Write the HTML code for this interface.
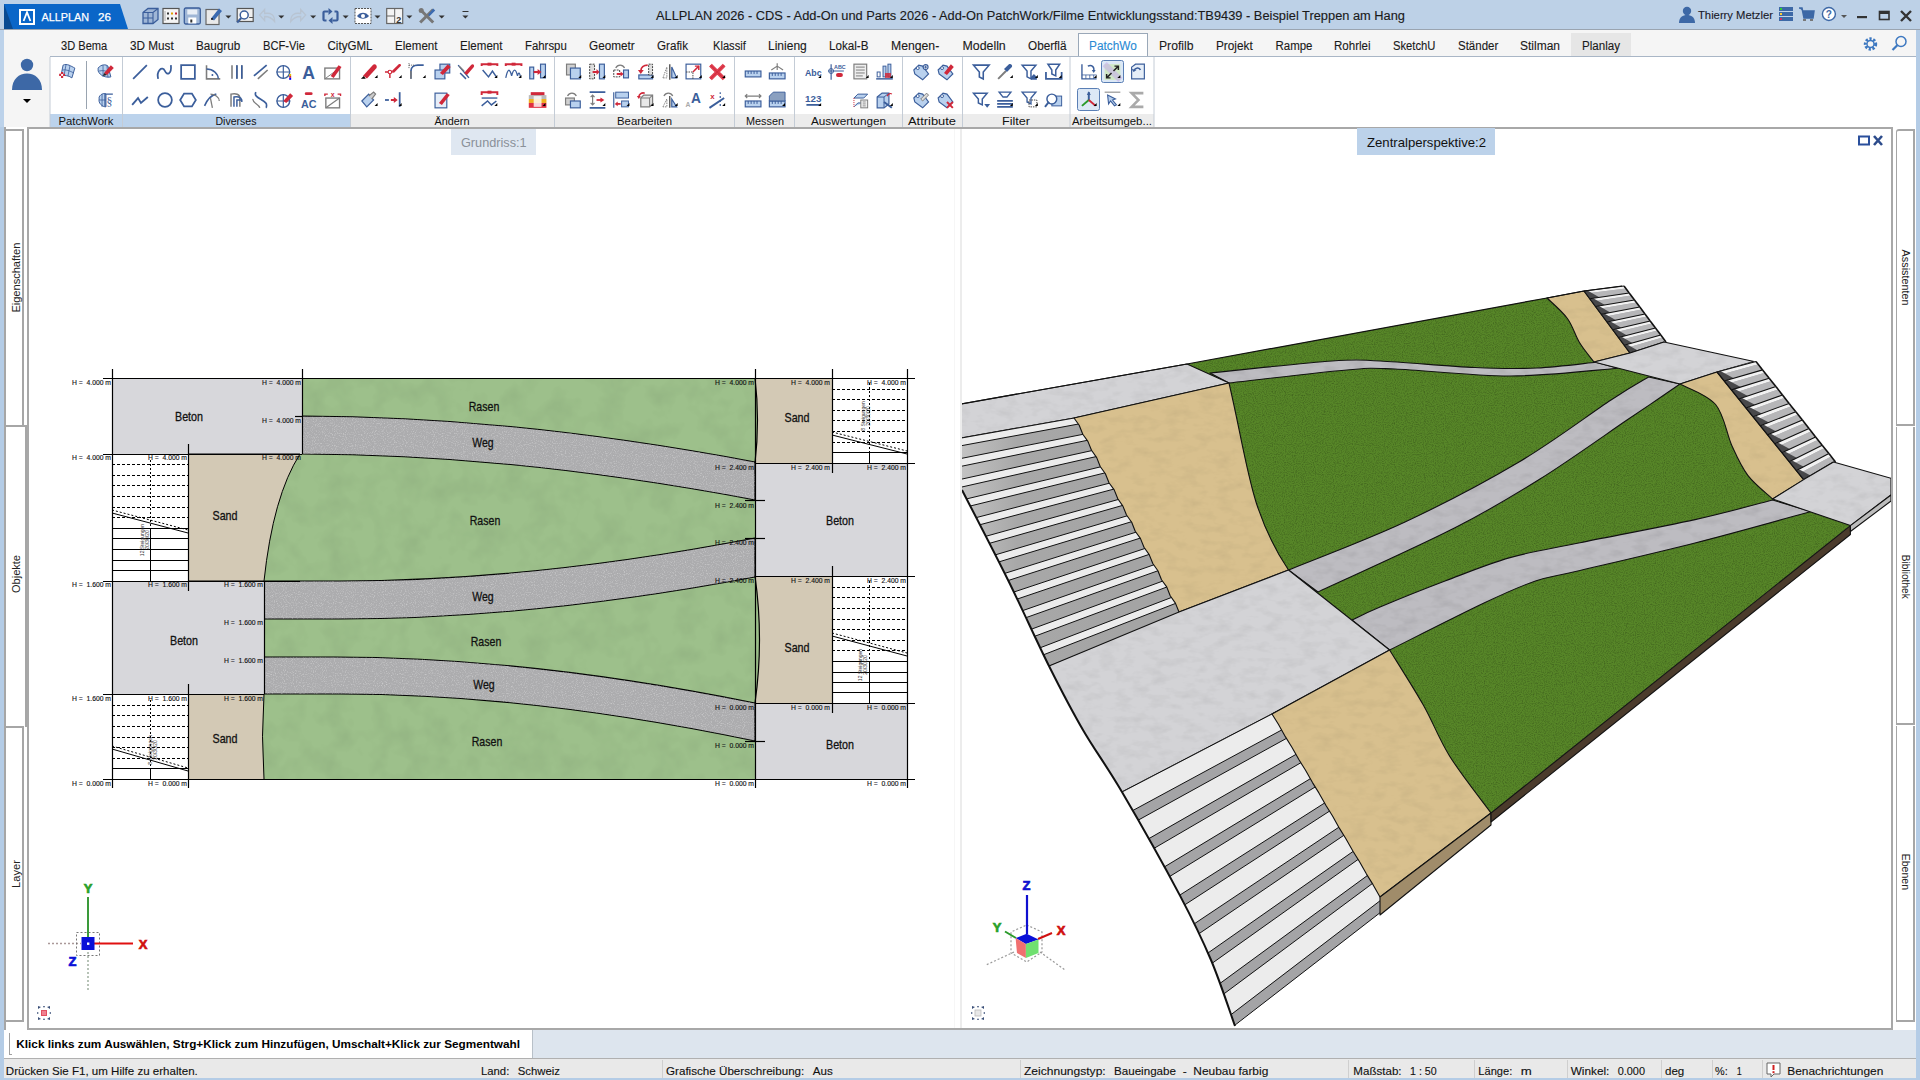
<!DOCTYPE html>
<html><head><meta charset="utf-8">
<style>
*{margin:0;padding:0;box-sizing:border-box}
html,body{width:1920px;height:1080px;overflow:hidden}
body{position:relative;background:#bcd2ea;font-family:"Liberation Sans",sans-serif;color:#111}
.a{position:absolute}
.t{position:absolute;white-space:nowrap}
#title{left:0;top:0;width:1920px;height:29px;background:#bdd1e7}
#tabbar{left:4px;top:30px;width:1912px;height:27px;background:#f5f5f5}
.tab{position:absolute;top:38px;font-size:12px;letter-spacing:-0.45px;color:#1a1a1a}
#ribbon{left:4px;top:56px;width:1912px;height:71px;background:#fff}
.grp{position:absolute;top:56px;height:71px;border-left:1px solid #c8d0da}
.glab{position:absolute;top:114px;height:13px;font-size:11px;color:#111;text-align:center;line-height:13px;letter-spacing:-0.1px}
.vtab{position:absolute;font-size:11px;color:#222;white-space:nowrap}
</style></head><body>
<!-- title bar -->
<div class="a" id="title"></div>
<div class="a" style="left:0;top:29px;width:1920px;height:1px;background:#9aa4b0"></div>
<svg class="a" style="left:0;top:0" width="140" height="30">
<polygon points="4,4 120,4 128,29 4,29" fill="#0a66c8"/>
<polygon points="4,4 4,29 13,29" fill="#094a91"/>
<rect x="20" y="10" width="14" height="14" fill="none" stroke="#fff" stroke-width="2"/>
<path d="M23.6,21 L27,12.2 L30.4,21" fill="none" stroke="#fff" stroke-width="1.8"/>
</svg>

<!-- tab bar -->
<div class="a" id="tabbar"></div>
<div class="a" style="left:1078px;top:33px;width:70px;height:24px;background:#fff;border:1px solid #9aa8b8;border-bottom:none"></div>
<div class="a" style="left:1571px;top:33px;width:60px;height:23px;background:#e6e6e6"></div>

<!-- ribbon -->
<div class="a" id="ribbon"></div>
<div class="a" style="left:50px;top:56px;width:1105px;height:1px;background:#a9b6c6"></div>
<div class="a" style="left:1155px;top:56px;width:761px;height:1px;background:#a9b6c6"></div>

<svg class="a" style="left:0;top:56px" width="1160" height="72" viewBox="0 56 1160 72" font-family="Liberation Sans">
<rect x="4" y="56" width="46" height="71" fill="#f5f5f5"/>
<circle cx="27" cy="65" r="6.2" fill="#3d68a6"/><path d="M12,90 C12,79 19,73.5 27,73.5 C35,73.5 42,79 42,90Z" fill="#3d68a6"/><path d="M23,99 L31,99 L27,103Z" fill="#000"/>
<rect x="50" y="114" width="72.5" height="13" fill="#bcd3ec"/>
<line x1="50" y1="57" x2="50" y2="127" stroke="#c4ccd6" stroke-width="1"/>
<rect x="122.5" y="114" width="228.0" height="13" fill="#bcd3ec"/>
<line x1="122.5" y1="57" x2="122.5" y2="127" stroke="#c4ccd6" stroke-width="1"/>
<rect x="350.5" y="114" width="204.0" height="13" fill="#ececec"/>
<line x1="350.5" y1="57" x2="350.5" y2="127" stroke="#c4ccd6" stroke-width="1"/>
<rect x="554.5" y="114" width="180.0" height="13" fill="#ececec"/>
<line x1="554.5" y1="57" x2="554.5" y2="127" stroke="#c4ccd6" stroke-width="1"/>
<rect x="734.5" y="114" width="60.0" height="13" fill="#ececec"/>
<line x1="734.5" y1="57" x2="734.5" y2="127" stroke="#c4ccd6" stroke-width="1"/>
<rect x="794.5" y="114" width="108.0" height="13" fill="#ececec"/>
<line x1="794.5" y1="57" x2="794.5" y2="127" stroke="#c4ccd6" stroke-width="1"/>
<rect x="902.5" y="114" width="60.0" height="13" fill="#ececec"/>
<line x1="902.5" y1="57" x2="902.5" y2="127" stroke="#c4ccd6" stroke-width="1"/>
<rect x="962.5" y="114" width="107.5" height="13" fill="#ececec"/>
<line x1="962.5" y1="57" x2="962.5" y2="127" stroke="#c4ccd6" stroke-width="1"/>
<rect x="1070" y="114" width="84" height="13" fill="#ececec"/>
<line x1="1070" y1="57" x2="1070" y2="127" stroke="#c4ccd6" stroke-width="1"/>
<line x1="1154" y1="57" x2="1154" y2="127" stroke="#c4ccd6" stroke-width="1"/>
<line x1="86.5" y1="61" x2="86.5" y2="109" stroke="#9aa4b0" stroke-width="1"/>
<rect x="1101.5" y="60.5" width="22" height="22" rx="2" fill="#dce8f6" stroke="#5a7fb5" stroke-width="1"/>
<rect x="1077.5" y="88.5" width="22" height="22" rx="2" fill="#dce8f6" stroke="#5a7fb5" stroke-width="1"/>
<g transform="translate(57.2,62.2) scale(0.98)"><path d="M6,3 C10,1 14,4 18,6 L15,16 C11,13 8,14 4,13Z" fill="#b9d1ee" stroke="#3b5e9b" stroke-width="1"/><path d="M5,8 C9,7 13,9 17,11 M9,2.5 L7,13.5 M13,3.8 L11,14" stroke="#3b5e9b" stroke-width="0.8" fill="none"/><path d="M2,13 L8,13 M5,10 L5,16" stroke="#d0283a" stroke-width="2.2"/><rect x="4" y="12" width="2" height="2" fill="#fff"/></g>
<g transform="translate(95.2,62.2) scale(0.98)"><path d="M3,6 C6,2 11,2 13,4 L16,15 C11,16 5,14 3,9Z" fill="#b9d1ee" stroke="#3b5e9b" stroke-width="1"/><path d="M4,9 C8,8 12,9 15,11 M8,3 L8,15 M12,3.5 L13,15.5" stroke="#3b5e9b" stroke-width="0.8" fill="none"/><path d="M9,11 L16,3 L19,6 L12,13Z" fill="#d0283a"/><path d="M9,11 L12,13 L8,14Z" fill="#222"/></g>
<g transform="translate(95.2,90.2) scale(0.98)"><path d="M4,7 C6,3 10,3 11,4 L11,17 C7,17 3,13 4,9Z" fill="#b9d1ee" stroke="#3b5e9b" stroke-width="1"/><path d="M4,10 L11,10 M7,4 L7,17" stroke="#3b5e9b" stroke-width="0.8"/><path d="M10,4 L18,4 M10,3 L10,17" stroke="#3b5e9b" stroke-width="1.3"/><text x="14.5" y="16" font-size="12" fill="#3b5e9b" text-anchor="middle" font-family="Liberation Serif">§</text></g>
<g transform="translate(130.2,62.2) scale(0.98)"><path d="M3,17 L17,3" stroke="#3b5e9b" stroke-width="1.8"/></g>
<g transform="translate(155.2,62.2) scale(0.98)"><path d="M3,17 C1,9 7,3 10,9 C12,14 17,12 16,3" stroke="#3b5e9b" stroke-width="1.8" fill="none"/></g>
<g transform="translate(178.2,62.2) scale(0.98)"><rect x="3" y="3" width="14" height="14" fill="none" stroke="#3b5e9b" stroke-width="1.8"/></g>
<g transform="translate(202.6,62.2) scale(0.98)"><path d="M4,3 L4,17 L18,17" stroke="#7d7d7d" stroke-width="1.6" fill="none"/><path d="M4,7 C11,7 16,12 16,17" stroke="#3b5e9b" stroke-width="1.4" fill="none"/><circle cx="10" cy="13" r="1" fill="#3b5e9b"/></g>
<g transform="translate(227.1,62.2) scale(0.98)"><path d="M5,3 L5,17 M10,3 L10,17 M15,3 L15,17" stroke="#7d7d7d" stroke-width="1.6"/><path d="M10,3 L10,17 M15,3 L15,17" stroke="#3b5e9b" stroke-width="1.6"/></g>
<g transform="translate(251.0,62.2) scale(0.98)"><path d="M3,14 L16,3" stroke="#3b5e9b" stroke-width="1.8"/><path d="M7,17 L17,8" stroke="#7d7d7d" stroke-width="1.6"/></g>
<g transform="translate(274.5,62.2) scale(0.98)"><circle cx="9" cy="10" r="6.5" fill="none" stroke="#3b5e9b" stroke-width="1.4"/><path d="M2,10 L16,10 M9,3 L9,17" stroke="#3b5e9b" stroke-width="1.2"/><rect x="15" y="12" width="2" height="2" fill="#e8c000"/><rect x="15" y="14" width="2" height="2" fill="#d0283a"/><rect x="15" y="16" width="2" height="2" fill="#00f"/></g>
<g transform="translate(298.9,62.2) scale(0.98)"><text x="10" y="17" font-size="18" font-weight="bold" fill="#3b5e9b" text-anchor="middle" font-family="Liberation Sans">A</text></g>
<g transform="translate(322.9,62.2) scale(0.98)"><rect x="2" y="6" width="15" height="11" fill="none" stroke="#7d7d7d" stroke-width="1.4"/><path d="M2,17 L17,6" stroke="#7d7d7d" stroke-width="1"/><path d="M8,14 L16,3 L19,5 L11,16Z" fill="#d0283a"/></g>
<g transform="translate(130.2,90.2) scale(0.98)"><path d="M2,15 L8,8 L11,13 L18,7" stroke="#3b5e9b" stroke-width="1.9" fill="none"/></g>
<g transform="translate(155.2,90.2) scale(0.98)"><circle cx="10" cy="10" r="7" fill="none" stroke="#3b5e9b" stroke-width="1.8"/></g>
<g transform="translate(178.2,90.2) scale(0.98)"><path d="M6,3.5 L14,3.5 L18,10 L14,16.5 L6,16.5 L2,10Z" fill="none" stroke="#3b5e9b" stroke-width="1.8"/></g>
<g transform="translate(202.6,90.2) scale(0.98)"><path d="M2,16 C5,9 9,5 14,4" stroke="#3b5e9b" stroke-width="1.6" fill="none"/><path d="M8,4 C12,4 17,7 17,11" stroke="#7d7d7d" stroke-width="1.3" fill="none"/><path d="M8,8 L10,18" stroke="#7d7d7d" stroke-width="1.3"/></g>
<g transform="translate(227.1,90.2) scale(0.98)"><path d="M4,17 L4,4 C9,3 13,4 13,8 L13,17" stroke="#7d7d7d" stroke-width="1.5" fill="none"/><path d="M7,17 L7,7 C10,6 14,7 15,10 L15,12" stroke="#3b5e9b" stroke-width="1.5" fill="none"/><path d="M10,17 L10,10 L15,10" stroke="#3b5e9b" stroke-width="1.5" fill="none"/></g>
<g transform="translate(251.0,90.2) scale(0.98)"><path d="M5,2 C2,7 12,9 15,13 C17,15 15,17 16,18" stroke="#3b5e9b" stroke-width="1.7" fill="none"/><path d="M2,9 C1,13 8,14 9,18" stroke="#7d7d7d" stroke-width="1.3" fill="none"/></g>
<g transform="translate(274.5,90.2) scale(0.98)"><circle cx="9" cy="11" r="6.5" fill="none" stroke="#3b5e9b" stroke-width="1.4"/><path d="M2,11 L16,11 M9,4 L9,18" stroke="#3b5e9b" stroke-width="1.2"/><path d="M9,11 L16,3 L19,6 L12,13Z" fill="#d0283a"/></g>
<g transform="translate(298.9,90.2) scale(0.98)"><rect x="6" y="2" width="8" height="3" rx="1.5" fill="#d0283a"/><text x="10" y="18" font-size="11" font-weight="bold" fill="#3b5e9b" text-anchor="middle" font-family="Liberation Sans">AC</text></g>
<g transform="translate(322.9,90.2) scale(0.98)"><rect x="3" y="8" width="14" height="10" fill="none" stroke="#7d7d7d" stroke-width="1.4"/><path d="M3,18 L17,8" stroke="#7d7d7d" stroke-width="1.2"/><path d="M2,6 L2,4 L5,4 M15,4 L18,4 L18,6" stroke="#d0283a" stroke-width="1.4" fill="none"/><text x="10" y="7" font-size="7" font-weight="bold" fill="#d0283a" text-anchor="middle">x</text></g>
<g transform="translate(359.9,62.2) scale(0.98)"><path d="M3,14 L13,3 C15,1 18,3 17,6 L7,17Z" fill="#d0283a"/><path d="M3,14 L7,17" stroke="#fff" stroke-width="1"/><path d="M1,17 L4,14 L6,17Z" fill="#000"/><path d="M15,16 L18,13 L18,16Z" fill="#000"/></g>
<g transform="translate(384.0,62.2) scale(0.98)"><path d="M1,10 L9,10 M6,10 L6,16" stroke="#d0283a" stroke-width="1.5"/><circle cx="6" cy="10" r="1.8" fill="#fff" stroke="#d0283a" stroke-width="1.2"/><path d="M8,9 L15,2 C17,1 18,3 17,4 L10,11Z" fill="#d0283a"/><path d="M15,16 L18,13 L18,16Z" fill="#000"/></g>
<g transform="translate(408.0,62.2) scale(0.98)"><path d="M3,17 L3,9 C3,5 6,3 10,3 L16,3" stroke="#3b5e9b" stroke-width="1.8" fill="none"/><path d="M3,9 L3,17" stroke="#7d7d7d" stroke-width="1.6"/><path d="M1,3 L7,3 M1,1 L1,7" stroke="#333" stroke-width="0.8" stroke-dasharray="1,1"/><path d="M15,16 L18,13 L18,16Z" fill="#000"/></g>
<g transform="translate(432.1,62.2) scale(0.98)"><rect x="8" y="2" width="10" height="9" fill="#b9d1ee" stroke="#3b5e9b" stroke-width="1.2"/><rect x="3" y="8" width="10" height="9" fill="#b9d1ee" stroke="#3b5e9b" stroke-width="1.2"/><path d="M8,11 L16,2 L19,5 L11,13Z" fill="#d0283a"/></g>
<g transform="translate(456.2,62.2) scale(0.98)"><path d="M2,3 L13,16 M4,11 L10,17" stroke="#3b5e9b" stroke-width="1.5"/><path d="M8,11 L15,3 C17,1 19,3 18,5 L11,13Z" fill="#d0283a"/><path d="M3,4 L8,9" stroke="#7d7d7d" stroke-width="1.3"/></g>
<g transform="translate(479.7,62.2) scale(0.98)"><path d="M2,4 L2,2 L18,2 L18,4" stroke="#d0283a" stroke-width="2" fill="none"/><path d="M8,2 L12,2" stroke="#d0283a" stroke-width="3"/><path d="M3,8 L9,15 L13,9 L17,15" stroke="#3b5e9b" stroke-width="1.5" fill="none"/><path d="M15,16 L18,13 L18,16Z" fill="#000"/></g>
<g transform="translate(503.8,62.2) scale(0.98)"><path d="M2,4 L2,2 L18,2 L18,4" stroke="#d0283a" stroke-width="2" fill="none"/><path d="M8,2 L12,2" stroke="#d0283a" stroke-width="3"/><path d="M2,16 C4,6 6,6 8,14 C10,6 12,6 14,14 C15,10 16,10 17,15" stroke="#3b5e9b" stroke-width="1.3" fill="none"/><path d="M15,16 L18,13 L18,16Z" fill="#000"/></g>
<g transform="translate(527.8,62.2) scale(0.98)"><rect x="2" y="5" width="4" height="12" fill="#b9d1ee" stroke="#3b5e9b" stroke-width="1.2"/><rect x="13" y="2" width="5" height="14" fill="#b9d1ee" stroke="#3b5e9b" stroke-width="1.2"/><path d="M6,10 L12,10" stroke="#d0283a" stroke-width="2.2"/><path d="M10,7 L14,10 L10,13Z" fill="#d0283a"/><path d="M15,16 L18,13 L18,16Z" fill="#000"/></g>
<g transform="translate(359.9,90.2) scale(0.98)"><path d="M2,11 L9,4 L14,10 L7,17Z" fill="#b9d1ee" stroke="#3b5e9b" stroke-width="1.2"/><path d="M9,6 L14,2 L16,4 L12,9" fill="#ccc" stroke="#7d7d7d" stroke-width="1.2"/><path d="M15,16 L18,13 L18,16Z" fill="#000"/></g>
<g transform="translate(384.0,90.2) scale(0.98)"><path d="M1,10 L5,10" stroke="#3b5e9b" stroke-width="1.8"/><path d="M7,10 L12,10" stroke="#d0283a" stroke-width="2"/><path d="M10,7 L14,10 L10,13Z" fill="#d0283a"/><path d="M16,2 L16,17" stroke="#3b5e9b" stroke-width="1.8"/><path d="M15,16 L18,13 L18,16Z" fill="#000"/></g>
<g transform="translate(432.1,90.2) scale(0.98)"><rect x="3" y="3" width="12" height="15" fill="#e6eef8" stroke="#3b5e9b" stroke-width="1.2"/><path d="M7,13 L15,3 L18,5 L10,15Z" fill="#d0283a"/></g>
<g transform="translate(479.7,90.2) scale(0.98)"><path d="M2,5 L2,2 L18,2 L18,5" stroke="#d0283a" stroke-width="2" fill="none"/><path d="M8,2 L12,2" stroke="#d0283a" stroke-width="3"/><path d="M2,8 L18,8" stroke="#3b5e9b" stroke-width="1.4"/><path d="M2,16 L8,11 L12,15 L17,11" stroke="#3b5e9b" stroke-width="1.5" fill="none"/><path d="M15,16 L18,13 L18,16Z" fill="#000"/></g>
<g transform="translate(527.8,90.2) scale(0.98)"><rect x="3" y="2" width="14" height="4" fill="#d0283a"/><rect x="1" y="5" width="18" height="4" fill="#bbb"/><rect x="1" y="9" width="18" height="4" fill="#f0b020"/><rect x="1" y="13" width="18" height="5" fill="#e03040"/><rect x="6" y="6" width="8" height="11" fill="#fff" opacity="0.8"/><path d="M15,16 L18,13 L18,16Z" fill="#000"/></g>
<g transform="translate(563.6,62.2) scale(0.98)"><rect x="3" y="2" width="9" height="11" fill="#d0d0d0" stroke="#7d7d7d" stroke-width="1.2"/><rect x="7" y="6" width="10" height="11" fill="#b9d1ee" stroke="#3b5e9b" stroke-width="1.2"/><path d="M15,16 L18,13 L18,16Z" fill="#000"/></g>
<g transform="translate(587.7,62.2) scale(0.98)"><rect x="2" y="2" width="5" height="15" fill="#ddd" stroke="#444" stroke-width="1" stroke-dasharray="2,1"/><rect x="12" y="2" width="5" height="15" fill="#b9d1ee" stroke="#3b5e9b" stroke-width="1.2"/><path d="M5,10 L10,10" stroke="#d0283a" stroke-width="2"/><path d="M9,7 L12,10 L9,13Z" fill="#d0283a"/><path d="M15,16 L18,13 L18,16Z" fill="#000"/></g>
<g transform="translate(611.8,62.2) scale(0.98)"><path d="M4,6 C6,2 11,2 13,6" stroke="#7d7d7d" stroke-width="1.3" fill="none"/><rect x="2" y="8" width="6" height="7" fill="none" stroke="#444" stroke-width="1" stroke-dasharray="2,1"/><rect x="12" y="8" width="5" height="8" fill="#b9d1ee" stroke="#3b5e9b" stroke-width="1.2"/><path d="M5,12 L10,12" stroke="#d0283a" stroke-width="2"/><path d="M9,9.5 L12,12 L9,14.5Z" fill="#d0283a"/></g>
<g transform="translate(635.9,62.2) scale(0.98)"><rect x="3" y="13" width="14" height="4" fill="#b9d1ee" stroke="#3b5e9b" stroke-width="1.2"/><rect x="13" y="2" width="4" height="11" fill="#ddd" stroke="#444" stroke-width="1" stroke-dasharray="2,1"/><path d="M12,3 C8,3 5,5 5,9" stroke="#d0283a" stroke-width="1.8" fill="none"/><path d="M2,8 L5,12 L8,8Z" fill="#d0283a"/><path d="M15,16 L18,13 L18,16Z" fill="#000"/></g>
<g transform="translate(660.0,62.2) scale(0.98)"><path d="M10,2 L10,18" stroke="#333" stroke-width="1.2"/><path d="M3,16 L7,5 L7,16Z" fill="none" stroke="#7d7d7d" stroke-width="1" stroke-dasharray="1.5,1"/><path d="M12,16 L12,5 L17,16Z" fill="#b9d1ee" stroke="#3b5e9b" stroke-width="1.2"/><path d="M15,16 L18,13 L18,16Z" fill="#000"/></g>
<g transform="translate(684.1,62.2) scale(0.98)"><rect x="2" y="2" width="15" height="15" fill="none" stroke="#3b5e9b" stroke-width="1.2"/><path d="M2,10 L9,10 L9,17" stroke="#444" stroke-width="1" stroke-dasharray="1.5,1" fill="none"/><path d="M9,10 L15,4" stroke="#d0283a" stroke-width="1.5"/><path d="M11,4 L15,4 L15,8" stroke="#d0283a" stroke-width="1.5" fill="none"/><path d="M15,16 L18,13 L18,16Z" fill="#000"/></g>
<g transform="translate(707.5,62.2) scale(0.98)"><path d="M3,3 L17,17 M17,3 L3,17" stroke="#e04050" stroke-width="4"/><path d="M3,3 L17,17 M17,3 L3,17" stroke="#d0283a" stroke-width="1"/><path d="M15,16 L18,13 L18,16Z" fill="#000"/></g>
<g transform="translate(563.6,90.2) scale(0.98)"><path d="M4,6 C6,2 11,2 13,6" stroke="#7d7d7d" stroke-width="1.3" fill="none"/><rect x="2" y="8" width="9" height="7" fill="#d0d0d0" stroke="#7d7d7d" stroke-width="1.2"/><rect x="7" y="11" width="10" height="7" fill="#b9d1ee" stroke="#3b5e9b" stroke-width="1.2"/></g>
<g transform="translate(587.7,90.2) scale(0.98)"><path d="M2,2 L18,2 M2,18 L18,18" stroke="#3b5e9b" stroke-width="1.8"/><path d="M5,5 L5,15 M3,7 L5,5 L7,7 M3,13 L5,15 L7,13" stroke="#7d7d7d" stroke-width="1.2" fill="none"/><path d="M9,10 L15,10" stroke="#d0283a" stroke-width="1.8"/><path d="M13,7.5 L17,10 L13,12.5Z" fill="#d0283a"/><path d="M15,16 L18,13 L18,16Z" fill="#000"/></g>
<g transform="translate(611.8,90.2) scale(0.98)"><path d="M2,2 L2,18" stroke="#3b5e9b" stroke-width="1.2"/><rect x="4" y="2" width="13" height="6" fill="#b9d1ee" stroke="#3b5e9b" stroke-width="1"/><rect x="10" y="11" width="7" height="6" fill="#b9d1ee" stroke="#3b5e9b" stroke-width="1"/><path d="M5,14 L9,14" stroke="#d0283a" stroke-width="1.8"/><path d="M6,11.5 L3,14 L6,16.5Z" fill="#d0283a"/><path d="M15,16 L18,13 L18,16Z" fill="#000"/></g>
<g transform="translate(635.9,90.2) scale(0.98)"><path d="M5,8 L8,5 L17,5 L17,14 L14,17 L5,17Z" fill="#e8e8e8" stroke="#7d7d7d" stroke-width="1.3"/><path d="M5,8 L14,8 L17,5 M14,8 L14,17" stroke="#7d7d7d" stroke-width="1.1" fill="none"/><path d="M9,3 C6,2 3,4 3,7" stroke="#d0283a" stroke-width="1.6" fill="none"/><path d="M1,6 L3,9 L5,6Z" fill="#d0283a"/><path d="M15,16 L18,13 L18,16Z" fill="#000"/></g>
<g transform="translate(660.0,90.2) scale(0.98)"><path d="M4,6 C6,2 11,2 13,6" stroke="#7d7d7d" stroke-width="1.3" fill="none"/><path d="M10,6 L10,18" stroke="#333" stroke-width="1.2"/><path d="M3,17 L7,9 L7,17Z" fill="none" stroke="#7d7d7d" stroke-width="1" stroke-dasharray="1.5,1"/><path d="M12,17 L12,9 L17,17Z" fill="#b9d1ee" stroke="#3b5e9b" stroke-width="1.2"/><path d="M15,16 L18,13 L18,16Z" fill="#000"/></g>
<g transform="translate(684.1,90.2) scale(0.98)"><text x="4" y="17" font-size="7" font-weight="bold" fill="#aaa" text-anchor="middle">A</text><text x="12" y="13" font-size="14" font-weight="bold" fill="#3b5e9b" text-anchor="middle">A</text></g>
<g transform="translate(707.5,90.2) scale(0.98)"><text x="5" y="9" font-size="8" font-weight="bold" fill="#d0283a" text-anchor="middle">x</text><path d="M13,2 L13,18" stroke="#3b5e9b" stroke-width="1.2" stroke-dasharray="2,2"/><path d="M2,18 L17,8" stroke="#3b5e9b" stroke-width="2"/><path d="M15,16 L18,13 L18,16Z" fill="#000"/></g>
<g transform="translate(743.3,62.2) scale(0.98)"><rect x="2" y="9" width="16" height="6" fill="#b9d1ee" stroke="#3b5e9b" stroke-width="1.2"/><path d="M5,9 L5,12 M8,9 L8,12 M11,9 L11,12 M14,9 L14,12" stroke="#3b5e9b" stroke-width="1"/></g>
<g transform="translate(767.4,62.2) scale(0.98)"><rect x="2" y="11" width="16" height="6" fill="#b9d1ee" stroke="#3b5e9b" stroke-width="1.2"/><path d="M5,11 L5,14 M8,11 L8,14 M11,11 L11,14 M14,11 L14,14" stroke="#3b5e9b" stroke-width="1"/><path d="M4,8 L10,4 L16,8 M10,1 L10,8" stroke="#7d7d7d" stroke-width="1.2" fill="none"/></g>
<g transform="translate(743.3,90.2) scale(0.98)"><rect x="2" y="11" width="16" height="6" fill="#b9d1ee" stroke="#3b5e9b" stroke-width="1.2"/><path d="M5,11 L5,14 M8,11 L8,14 M11,11 L11,14 M14,11 L14,14" stroke="#3b5e9b" stroke-width="1"/><path d="M2,6 L18,6 M4,4 L2,6 L4,8 M16,4 L18,6 L16,8" stroke="#7d7d7d" stroke-width="1.2" fill="none"/></g>
<g transform="translate(767.4,90.2) scale(0.98)"><rect x="2" y="11" width="16" height="6" fill="#b9d1ee" stroke="#3b5e9b" stroke-width="1.2"/><path d="M5,11 L5,14 M8,11 L8,14 M11,11 L11,14 M14,11 L14,14" stroke="#3b5e9b" stroke-width="1"/><path d="M2,11 L2,6 L6,2 L18,2 L18,11Z" fill="#8aa0c0" stroke="#3b5e9b" stroke-width="1"/><path d="M15,16 L18,13 L18,16Z" fill="#000"/></g>
<g transform="translate(803.5,62.2) scale(0.98)"><text x="10" y="14" font-size="9" font-weight="bold" fill="#3b5e9b" text-anchor="middle">Abc</text><path d="M15,16 L18,13 L18,16Z" fill="#000"/></g>
<g transform="translate(827.2,62.2) scale(0.98)"><path d="M4,2 L4,18 M1,9 L17,9" stroke="#3b5e9b" stroke-width="1.2"/><circle cx="4" cy="9" r="2.5" fill="none" stroke="#3b5e9b" stroke-width="1"/><text x="13" y="7" font-size="5.5" font-weight="bold" fill="#3b5e9b" text-anchor="middle">ABC</text><rect x="9" y="11" width="7" height="4" rx="2" fill="#d0283a"/></g>
<g transform="translate(851.0,62.2) scale(0.98)"><rect x="3" y="2" width="13" height="15" fill="#eee" stroke="#7d7d7d" stroke-width="1.2"/><path d="M5,5 L14,5 M5,8 L14,8 M5,11 L14,11 M5,14 L12,14" stroke="#7d7d7d" stroke-width="1"/><path d="M15,16 L18,13 L18,16Z" fill="#000"/></g>
<g transform="translate(875.2,62.2) scale(0.98)"><path d="M1,17 L18,17" stroke="#3b5e9b" stroke-width="1.5"/><rect x="2" y="10" width="3" height="5" fill="none" stroke="#3b5e9b" stroke-width="1"/><rect x="8" y="4" width="3" height="11" fill="#b9d1ee" stroke="#3b5e9b" stroke-width="1"/><rect x="13" y="2" width="3" height="13" fill="#b9d1ee" stroke="#3b5e9b" stroke-width="1"/><rect x="10" y="11" width="6" height="5" fill="#d0283a" opacity="0.85"/><path d="M15,16 L18,13 L18,16Z" fill="#000"/></g>
<g transform="translate(803.5,90.2) scale(0.98)"><text x="10" y="12" font-size="10" font-weight="bold" fill="#3b5e9b" text-anchor="middle">123</text><path d="M3,15 L17,15" stroke="#3b5e9b" stroke-width="1.8"/><path d="M15,16 L18,13 L18,16Z" fill="#000"/></g>
<g transform="translate(851.0,90.2) scale(0.98)"><path d="M3,8 L7,4 L17,4 L13,8Z" fill="#b9d1ee" stroke="#3b5e9b" stroke-width="1"/><path d="M3,17 L7,13 L12,13" stroke="#3b5e9b" stroke-width="1" fill="#b9d1ee"/><path d="M3,8 L3,17" stroke="#d0283a" stroke-width="1" stroke-dasharray="1,1"/><rect x="10" y="10" width="7" height="8" fill="#eee" stroke="#7d7d7d" stroke-width="1"/><path d="M12,12 L15,12 M12,14 L15,14 M12,16 L15,16" stroke="#7d7d7d" stroke-width="0.8"/></g>
<g transform="translate(875.2,90.2) scale(0.98)"><path d="M2,7 L7,3 L14,3 L14,14 L9,18 L2,18Z" fill="#b9d1ee" stroke="#3b5e9b" stroke-width="1.2"/><path d="M2,7 L9,7 L14,3 M9,7 L9,18" stroke="#3b5e9b" stroke-width="1" fill="none"/><path d="M9,12 L17,18" stroke="#3b5e9b" stroke-width="2"/><path d="M12,6 C14,3 16,3 17,4" stroke="#d0283a" stroke-width="1.2" fill="none"/><path d="M15,16 L18,13 L18,16Z" fill="#000"/></g>
<g transform="translate(910.9,62.2) scale(0.98)"><path d="M3,8 L8,3 L12,4 L18,12 L12,18 L4,12Z" fill="#b9d1ee" stroke="#3b5e9b" stroke-width="1.2" transform="rotate(0)"/><circle cx="7" cy="6" r="1.5" fill="#fff" stroke="#3b5e9b" stroke-width="1"/><circle cx="15" cy="5" r="2.5" fill="#fff" stroke="#3b5e9b" stroke-width="1.2"/><path d="M15,3.5 L15,6.5 M13.5,5 L16.5,5" stroke="#3b5e9b" stroke-width="1"/></g>
<g transform="translate(935.2,62.2) scale(0.98)"><path d="M3,8 L8,3 L12,4 L18,12 L12,18 L4,12Z" fill="#b9d1ee" stroke="#3b5e9b" stroke-width="1.2"/><circle cx="7" cy="6" r="1.5" fill="#fff" stroke="#3b5e9b" stroke-width="1"/><path d="M9,11 L16,2 L19,5 L12,13Z" fill="#d0283a"/></g>
<g transform="translate(910.9,90.2) scale(0.98)"><path d="M3,8 L8,3 L12,4 L18,12 L12,18 L4,12Z" fill="#b9d1ee" stroke="#3b5e9b" stroke-width="1.2"/><circle cx="7" cy="6" r="1.5" fill="#fff" stroke="#3b5e9b" stroke-width="1"/><path d="M10,9 L16,3 L18,5 L12,11Z" fill="#ddd" stroke="#7d7d7d" stroke-width="1"/></g>
<g transform="translate(935.2,90.2) scale(0.98)"><path d="M3,8 L8,3 L12,4 L18,12 L12,18 L4,12Z" fill="#b9d1ee" stroke="#3b5e9b" stroke-width="1.2"/><circle cx="7" cy="6" r="1.5" fill="#fff" stroke="#3b5e9b" stroke-width="1"/><path d="M12,12 L18,18 M18,12 L12,18" stroke="#d0283a" stroke-width="2"/></g>
<g transform="translate(971.5,62.2) scale(0.98)"><path d="M2,3 L18,3 L12,10 L12,17 L8,15 L8,10Z" fill="none" stroke="#3b5e9b" stroke-width="1.6"/></g>
<g transform="translate(995.2,62.2) scale(0.98)"><path d="M3,17 L11,9" stroke="#7d7d7d" stroke-width="2"/><path d="M9,7 L14,2 C16,1 18,3 17,5 L12,10Z" fill="#3b5e9b"/><path d="M15,16 L18,13 L18,16Z" fill="#000"/></g>
<g transform="translate(1020.2,62.2) scale(0.98)"><path d="M2,3 L16,3 L11,9 L11,17 L7,15 L7,9Z" fill="none" stroke="#3b5e9b" stroke-width="1.5"/><path d="M11,15 L14,12 L17,15 L17,18 L11,18Z" fill="#3b5e9b"/><path d="M15,16 L18,13 L18,16Z" fill="#000"/></g>
<g transform="translate(1044.0,62.2) scale(0.98)"><path d="M4,2 L16,2 L12,8 L12,14 L8,12 L8,8Z" fill="none" stroke="#3b5e9b" stroke-width="1.5"/><path d="M2,10 L2,17 L18,17 L18,10" stroke="#3b5e9b" stroke-width="1.8" fill="none"/><path d="M15,16 L18,13 L18,16Z" fill="#000"/></g>
<g transform="translate(971.5,90.2) scale(0.98)"><path d="M2,3 L16,3 L11,9 L11,15 L7,13 L7,9Z" fill="none" stroke="#3b5e9b" stroke-width="1.5"/><path d="M13,14 L19,14 L16,18Z" fill="#3b5e9b"/></g>
<g transform="translate(995.2,90.2) scale(0.98)"><path d="M4,2 L16,2 L12,7 L8,7Z" fill="none" stroke="#3b5e9b" stroke-width="1.4"/><path d="M2,11 L18,11 M2,14 L18,14 M2,17 L18,17" stroke="#3b5e9b" stroke-width="1.8"/><path d="M15,16 L18,13 L18,16Z" fill="#000"/></g>
<g transform="translate(1020.2,90.2) scale(0.98)"><path d="M2,2 L16,2 L11,8 L11,14 L7,12 L7,8Z" fill="none" stroke="#3b5e9b" stroke-width="1.4"/><rect x="9" y="10" width="8" height="7" fill="none" stroke="#444" stroke-width="1" stroke-dasharray="1.5,1"/><path d="M15,16 L18,13 L18,16Z" fill="#000"/></g>
<g transform="translate(1044.0,90.2) scale(0.98)"><rect x="8" y="6" width="10" height="10" fill="#b9d1ee" stroke="#3b5e9b" stroke-width="1"/><circle cx="8" cy="9" r="5" fill="#fff" stroke="#3b5e9b" stroke-width="1.5"/><path d="M5,12 L1,17" stroke="#3b5e9b" stroke-width="2"/></g>
<g transform="translate(1079.0,62.2) scale(0.98)"><path d="M3,2 L3,17 L18,17" stroke="#3b5e9b" stroke-width="1.4" fill="none"/><path d="M3,13 L18,13 M7,13 L7,17 M11,13 L11,17 M15,13 L15,17" stroke="#3b5e9b" stroke-width="0.8"/><path d="M9,4 C13,2 16,5 15,9" stroke="#3b5e9b" stroke-width="1.4" fill="none"/><path d="M13,8 L15,11 L17,8Z" fill="#3b5e9b"/><path d="M15,16 L18,13 L18,16Z" fill="#000"/></g>
<g transform="translate(1102.7,62.2) scale(0.98)"><rect x="2" y="2" width="16" height="16" fill="#cde8c0" opacity="0.9"/><path d="M2,2 L18,18" stroke="#c8b0e8" stroke-width="6" opacity="0.6"/><path d="M4,16 L9,11 M4,12 L4,16 L8,16 M16,4 L11,9 M12,4 L16,4 L16,8" stroke="#222" stroke-width="1.5" fill="none"/><path d="M15,16 L18,13 L18,16Z" fill="#000"/></g>
<g transform="translate(1127.7,62.2) scale(0.98)"><path d="M4,5 L8,2 L17,2 L17,17 L4,17Z" fill="#e6eef8" stroke="#3b5e9b" stroke-width="1.2"/><path d="M6,9 C8,5 12,5 13,8" stroke="#3b5e9b" stroke-width="1.6" fill="none"/><path d="M4,7 L6,10 L9,8Z" fill="#3b5e9b"/></g>
<g transform="translate(1079.0,90.2) scale(0.98)"><path d="M10,10 L10,2" stroke="#3b5e9b" stroke-width="2"/><path d="M8,5 L10,1 L12,5Z" fill="#3b5e9b"/><path d="M10,10 L3,16" stroke="#2a9a2a" stroke-width="2"/><path d="M10,10 L17,16" stroke="#d0283a" stroke-width="2"/><path d="M15,16 L18,13 L18,16Z" fill="#000"/></g>
<g transform="translate(1102.7,90.2) scale(0.98)"><path d="M2,2 L18,2" stroke="#7d7d7d" stroke-width="1"/><path d="M5,5 L13,9 L10,10 L14,15 L12,16 L8,11 L6,14Z" fill="#b9d1ee" stroke="#3b5e9b" stroke-width="1.1"/><path d="M15,16 L18,13 L18,16Z" fill="#000"/></g>
<g transform="translate(1127.7,90.2) scale(0.98)"><path d="M16,3 L4,3 L11,10 L4,17 L16,17" stroke="#aaa" stroke-width="2.6" fill="none"/></g>
</svg>

<div class="a" style="left:0;top:127px;width:1916px;height:2px;background:#a6a6a6"></div>

<!-- left sidebar -->
<div class="a" style="left:0;top:127px;width:4px;height:953px;background:#b4cce6"></div>
<div class="a" style="left:4px;top:127px;width:24px;height:903px;background:#fff"></div>
<div class="a" style="left:4px;top:127px;width:2px;height:903px;background:#a6a6a6"></div>
<div class="a" style="left:5px;top:129px;width:19px;height:297px;border:1px solid #a6a6a6;border-left:none;border-right:2px solid #a6a6a6;border-top:2px solid #a6a6a6;border-bottom:none"></div>
<div class="a" style="left:5px;top:425px;width:23px;height:2px;background:#a6a6a6"></div><div class="a" style="left:25px;top:426px;width:3px;height:301px;background:#a6a6a6"></div>
<div class="a" style="left:5px;top:726px;width:19px;height:296px;border-top:2px solid #a6a6a6;border-right:2px solid #a6a6a6;border-bottom:2px solid #a6a6a6"></div>

<!-- viewports -->
<div class="a" style="left:27px;top:127px;width:1866px;height:903px;background:#fff;border:2px solid #a8a8a8"></div>
<div class="a" style="left:960px;top:129px;width:2px;height:899px;background:#ececec"></div><div class="a" style="left:954px;top:129px;width:1px;height:899px;background:#f6f6f6"></div>
<svg class="a" style="left:0;top:0" width="960" height="1030" viewBox="0 0 960 1030">
<defs>
<filter id="nz" x="0" y="0" width="100%" height="100%" filterUnits="objectBoundingBox"><feTurbulence type="fractalNoise" baseFrequency="0.9" numOctaves="2" seed="3" result="t"/><feColorMatrix in="t" type="matrix" values="0 0 0 0 0  0 0 0 0 0  0 0 0 0 0  0 0 0 -2 1.1"/></filter>
<filter id="nzw" x="0" y="0" width="100%" height="100%" filterUnits="objectBoundingBox"><feTurbulence type="fractalNoise" baseFrequency="0.9" numOctaves="2" seed="3" result="t"/><feColorMatrix in="t" type="matrix" values="0 0 0 0 1  0 0 0 0 1  0 0 0 0 1  0 0 0 -2.4 1.25"/></filter>
<filter id="nz2" x="0" y="0" width="100%" height="100%" filterUnits="objectBoundingBox"><feTurbulence type="fractalNoise" baseFrequency="0.04" numOctaves="3" seed="5" result="t"/><feColorMatrix in="t" type="matrix" values="0 0 0 0 0  0 0 0 0 0  0 0 0 0 0  0 0 0 -2 1.2"/></filter>
</defs>
<rect x="188" y="378" width="580" height="401" fill="#9dc08b"/>
<rect x="188" y="378" width="580" height="401" fill="#4a6a38" filter="url(#nz2)" opacity="0.05"/>
<path d="M302,416 C453.0,416 604.0,433.5 755,462 L755,500 C604.0,471.5 453.0,454 302,454 Z" fill="#acacae" stroke="#000" stroke-width="1.1"/>
<path d="M264,581 L340,581 C478.3,581 616.7,564.7 755,538 L755,577 C616.7,603.0 478.3,619 340,619 L264,619 Z" fill="#acacae" stroke="#000" stroke-width="1.1"/>
<path d="M264,657 L334,657 C474.3,657 614.7,674.5 755,703 L755,741 C616.7,711.9 478.3,694 340,694 L264,694 Z" fill="#acacae" stroke="#000" stroke-width="1.1"/>
<clipPath id="wclip"><path d="M302,416 C453.0,416 604.0,433.5 755,462 L755,500 C604.0,471.5 453.0,454 302,454 Z"/><path d="M264,581 L340,581 C478.3,581 616.7,564.7 755,538 L755,577 C616.7,603.0 478.3,619 340,619 L264,619 Z"/><path d="M264,657 L334,657 C474.3,657 614.7,674.5 755,703 L755,741 C616.7,711.9 478.3,694 340,694 L264,694 Z"/></clipPath>
<rect x="264" y="400" width="491" height="350" fill="#fff" filter="url(#nzw)" opacity="0.35" clip-path="url(#wclip)"/>
<rect x="112" y="378" width="190" height="76" fill="#d7d7db"/>
<rect x="112" y="581" width="152" height="113" fill="#d7d7db"/>
<rect x="755" y="463" width="152" height="113" fill="#d7d7db"/>
<rect x="755" y="703" width="152" height="76" fill="#d7d7db"/>
<path d="M188,454 L300,454 Q273,496 264,581 L188,581 Z" fill="#d3c9b5" stroke="#000" stroke-width="1"/>
<path d="M188,694 L264,694 Q261,736 264,779 L188,779 Z" fill="#d3c9b5"/>
<path d="M264,694 Q261,736 264,779" fill="none" stroke="#000" stroke-width="1"/>
<path d="M755,378 L832,378 L832,463 L755,463 Q760,420 755,378 Z" fill="#d3c9b5"/>
<path d="M755,378 Q760,420 755,463" fill="none" stroke="#000" stroke-width="1.2"/>
<path d="M755,576 L832,576 L832,703 L755,703 Q764,640 755,576 Z" fill="#d3c9b5"/>
<path d="M755,576 Q764,640 755,703" fill="none" stroke="#000" stroke-width="1.2"/>
<rect x="112" y="454" width="76" height="127" fill="#fff"/>
<rect x="112" y="694" width="76" height="85" fill="#fff"/>
<rect x="832" y="378" width="75" height="85" fill="#fff"/>
<rect x="832" y="576" width="75" height="127" fill="#fff"/>
<line x1="112" y1="464.5" x2="188" y2="464.5" stroke="#000" stroke-width="1" stroke-dasharray="3,2"/>
<line x1="112" y1="475.5" x2="188" y2="475.5" stroke="#000" stroke-width="1" stroke-dasharray="3,2"/>
<line x1="112" y1="485.5" x2="188" y2="485.5" stroke="#000" stroke-width="1" stroke-dasharray="3,2"/>
<line x1="112" y1="496.5" x2="188" y2="496.5" stroke="#000" stroke-width="1" stroke-dasharray="3,2"/>
<line x1="112" y1="507.5" x2="188" y2="507.5" stroke="#000" stroke-width="1" stroke-dasharray="3,2"/>
<line x1="112" y1="517.5" x2="188" y2="517.5" stroke="#000" stroke-width="1" stroke-dasharray="3,2"/>
<line x1="112" y1="528.5" x2="188" y2="528.5" stroke="#000" stroke-width="1"/>
<line x1="112" y1="538.5" x2="188" y2="538.5" stroke="#000" stroke-width="1"/>
<line x1="112" y1="549.5" x2="188" y2="549.5" stroke="#000" stroke-width="1"/>
<line x1="112" y1="560.5" x2="188" y2="560.5" stroke="#000" stroke-width="1"/>
<line x1="112" y1="570.5" x2="188" y2="570.5" stroke="#000" stroke-width="1"/>
<line x1="112" y1="513" x2="188" y2="533" stroke="#000" stroke-width="1"/>
<line x1="112" y1="510" x2="188" y2="530" stroke="#000" stroke-width="1" stroke-dasharray="2,2"/>
<line x1="150.5" y1="460" x2="150.5" y2="581" stroke="#000" stroke-width="1" stroke-dasharray="2,2"/>
<line x1="150.5" y1="528" x2="150.5" y2="581" stroke="#000" stroke-width="1"/>
<line x1="112" y1="705.5" x2="188" y2="705.5" stroke="#000" stroke-width="1" stroke-dasharray="3,2"/>
<line x1="112" y1="715.5" x2="188" y2="715.5" stroke="#000" stroke-width="1" stroke-dasharray="3,2"/>
<line x1="112" y1="726.5" x2="188" y2="726.5" stroke="#000" stroke-width="1" stroke-dasharray="3,2"/>
<line x1="112" y1="737.5" x2="188" y2="737.5" stroke="#000" stroke-width="1" stroke-dasharray="3,2"/>
<line x1="112" y1="747.5" x2="188" y2="747.5" stroke="#000" stroke-width="1" stroke-dasharray="3,2"/>
<line x1="112" y1="758.5" x2="188" y2="758.5" stroke="#000" stroke-width="1" stroke-dasharray="3,2"/>
<line x1="112" y1="768.5" x2="188" y2="768.5" stroke="#000" stroke-width="1"/>
<line x1="112" y1="749" x2="188" y2="771" stroke="#000" stroke-width="1"/>
<line x1="112" y1="746" x2="188" y2="768" stroke="#000" stroke-width="1" stroke-dasharray="2,2"/>
<line x1="150.5" y1="700" x2="150.5" y2="779" stroke="#000" stroke-width="1" stroke-dasharray="2,2"/>
<line x1="150.5" y1="768" x2="150.5" y2="779" stroke="#000" stroke-width="1"/>
<line x1="832" y1="389.5" x2="907" y2="389.5" stroke="#000" stroke-width="1" stroke-dasharray="3,2"/>
<line x1="832" y1="399.5" x2="907" y2="399.5" stroke="#000" stroke-width="1" stroke-dasharray="3,2"/>
<line x1="832" y1="410.5" x2="907" y2="410.5" stroke="#000" stroke-width="1" stroke-dasharray="3,2"/>
<line x1="832" y1="420.5" x2="907" y2="420.5" stroke="#000" stroke-width="1" stroke-dasharray="3,2"/>
<line x1="832" y1="431.5" x2="907" y2="431.5" stroke="#000" stroke-width="1" stroke-dasharray="3,2"/>
<line x1="832" y1="442.5" x2="907" y2="442.5" stroke="#000" stroke-width="1" stroke-dasharray="3,2"/>
<line x1="832" y1="452.5" x2="907" y2="452.5" stroke="#000" stroke-width="1"/>
<line x1="832" y1="435" x2="907" y2="454" stroke="#000" stroke-width="1"/>
<line x1="832" y1="432" x2="907" y2="451" stroke="#000" stroke-width="1" stroke-dasharray="2,2"/>
<line x1="869.5" y1="383" x2="869.5" y2="463" stroke="#000" stroke-width="1" stroke-dasharray="2,2"/>
<line x1="869.5" y1="452" x2="869.5" y2="463" stroke="#000" stroke-width="1"/>
<line x1="832" y1="587.5" x2="907" y2="587.5" stroke="#000" stroke-width="1" stroke-dasharray="3,2"/>
<line x1="832" y1="597.5" x2="907" y2="597.5" stroke="#000" stroke-width="1" stroke-dasharray="3,2"/>
<line x1="832" y1="608.5" x2="907" y2="608.5" stroke="#000" stroke-width="1" stroke-dasharray="3,2"/>
<line x1="832" y1="619.5" x2="907" y2="619.5" stroke="#000" stroke-width="1" stroke-dasharray="3,2"/>
<line x1="832" y1="629.5" x2="907" y2="629.5" stroke="#000" stroke-width="1" stroke-dasharray="3,2"/>
<line x1="832" y1="640.5" x2="907" y2="640.5" stroke="#000" stroke-width="1" stroke-dasharray="3,2"/>
<line x1="832" y1="650.5" x2="907" y2="650.5" stroke="#000" stroke-width="1" stroke-dasharray="3,2"/>
<line x1="832" y1="661.5" x2="907" y2="661.5" stroke="#000" stroke-width="1"/>
<line x1="832" y1="672.5" x2="907" y2="672.5" stroke="#000" stroke-width="1"/>
<line x1="832" y1="682.5" x2="907" y2="682.5" stroke="#000" stroke-width="1"/>
<line x1="832" y1="692.5" x2="907" y2="692.5" stroke="#000" stroke-width="1"/>
<line x1="832" y1="636" x2="907" y2="656" stroke="#000" stroke-width="1"/>
<line x1="832" y1="633" x2="907" y2="653" stroke="#000" stroke-width="1" stroke-dasharray="2,2"/>
<line x1="869.5" y1="581" x2="869.5" y2="703" stroke="#000" stroke-width="1" stroke-dasharray="2,2"/>
<line x1="869.5" y1="661" x2="869.5" y2="703" stroke="#000" stroke-width="1"/>
<g font-size="5" fill="#333"><text transform="translate(144,540) rotate(-90)" text-anchor="middle">12 Steigungen</text><text transform="translate(149,540) rotate(-90)" text-anchor="middle">20/30/20</text>
<text transform="translate(152,750) rotate(-90)" text-anchor="middle">8 Steigungen</text><text transform="translate(157,750) rotate(-90)" text-anchor="middle">20/30/20</text>
<text transform="translate(865,416) rotate(-90)" text-anchor="middle">8 Steigungen</text><text transform="translate(870,416) rotate(-90)" text-anchor="middle">20/30/20</text>
<text transform="translate(862,665) rotate(-90)" text-anchor="middle">12 Steigungen</text><text transform="translate(867,665) rotate(-90)" text-anchor="middle">20/30/20</text></g>
<line x1="103" y1="378.5" x2="915" y2="378.5" stroke="#000" stroke-width="1.2"/>
<line x1="103" y1="779.5" x2="915" y2="779.5" stroke="#000" stroke-width="1.2"/>
<line x1="103" y1="454.5" x2="302" y2="454.5" stroke="#000" stroke-width="1.2"/>
<line x1="103" y1="581.5" x2="264" y2="581.5" stroke="#000" stroke-width="1.2"/>
<line x1="103" y1="694.5" x2="264" y2="694.5" stroke="#000" stroke-width="1.2"/>
<line x1="755" y1="463.5" x2="915" y2="463.5" stroke="#000" stroke-width="1.2"/>
<line x1="755" y1="576.5" x2="915" y2="576.5" stroke="#000" stroke-width="1.2"/>
<line x1="755" y1="703.5" x2="915" y2="703.5" stroke="#000" stroke-width="1.2"/>
<line x1="264" y1="581.5" x2="300" y2="581.5" stroke="#000" stroke-width="1"/>
<line x1="112.5" y1="369" x2="112.5" y2="788" stroke="#000" stroke-width="1.2"/>
<line x1="302.5" y1="369" x2="302.5" y2="454" stroke="#000" stroke-width="1.2"/>
<line x1="188.5" y1="444" x2="188.5" y2="591" stroke="#000" stroke-width="1.2"/>
<line x1="188.5" y1="684" x2="188.5" y2="788" stroke="#000" stroke-width="1.2"/>
<line x1="264.5" y1="581" x2="264.5" y2="694" stroke="#000" stroke-width="1.2"/>
<line x1="755.5" y1="369" x2="755.5" y2="788" stroke="#000" stroke-width="1.2"/>
<line x1="907.5" y1="369" x2="907.5" y2="788" stroke="#000" stroke-width="1.2"/>
<line x1="832.5" y1="369" x2="832.5" y2="473" stroke="#000" stroke-width="1.2"/>
<line x1="832.5" y1="566" x2="832.5" y2="713" stroke="#000" stroke-width="1.2"/>
<line x1="745" y1="500.5" x2="765" y2="500.5" stroke="#000" stroke-width="1.2"/>
<line x1="745" y1="538.5" x2="765" y2="538.5" stroke="#000" stroke-width="1.2"/>
<line x1="745" y1="741.5" x2="765" y2="741.5" stroke="#000" stroke-width="1.2"/>
<line x1="295" y1="416.5" x2="302" y2="416.5" stroke="#000" stroke-width="1.2"/>
<g fill="#111" stroke="#111" stroke-width="0.15" font-family="Liberation Sans"><text x="111" y="384.5" font-size="7.4" text-anchor="end" textLength="39" lengthAdjust="spacingAndGlyphs">H =&#160; 4.000 m</text><text x="111" y="460.0" font-size="7.4" text-anchor="end" textLength="39" lengthAdjust="spacingAndGlyphs">H =&#160; 4.000 m</text><text x="111" y="587.0" font-size="7.4" text-anchor="end" textLength="39" lengthAdjust="spacingAndGlyphs">H =&#160; 1.600 m</text><text x="111" y="701.0" font-size="7.4" text-anchor="end" textLength="39" lengthAdjust="spacingAndGlyphs">H =&#160; 1.600 m</text><text x="111" y="785.5" font-size="7.4" text-anchor="end" textLength="39" lengthAdjust="spacingAndGlyphs">H =&#160; 0.000 m</text><text x="187" y="460.0" font-size="7.4" text-anchor="end" textLength="39" lengthAdjust="spacingAndGlyphs">H =&#160; 4.000 m</text><text x="187" y="587.0" font-size="7.4" text-anchor="end" textLength="39" lengthAdjust="spacingAndGlyphs">H =&#160; 1.600 m</text><text x="187" y="701.0" font-size="7.4" text-anchor="end" textLength="39" lengthAdjust="spacingAndGlyphs">H =&#160; 1.600 m</text><text x="187" y="785.5" font-size="7.4" text-anchor="end" textLength="39" lengthAdjust="spacingAndGlyphs">H =&#160; 0.000 m</text><text x="301" y="384.5" font-size="7.4" text-anchor="end" textLength="39" lengthAdjust="spacingAndGlyphs">H =&#160; 4.000 m</text><text x="301" y="422.5" font-size="7.4" text-anchor="end" textLength="39" lengthAdjust="spacingAndGlyphs">H =&#160; 4.000 m</text><text x="301" y="460.0" font-size="7.4" text-anchor="end" textLength="39" lengthAdjust="spacingAndGlyphs">H =&#160; 4.000 m</text><text x="263" y="587.0" font-size="7.4" text-anchor="end" textLength="39" lengthAdjust="spacingAndGlyphs">H =&#160; 1.600 m</text><text x="263" y="625.0" font-size="7.4" text-anchor="end" textLength="39" lengthAdjust="spacingAndGlyphs">H =&#160; 1.600 m</text><text x="263" y="663.0" font-size="7.4" text-anchor="end" textLength="39" lengthAdjust="spacingAndGlyphs">H =&#160; 1.600 m</text><text x="263" y="701.0" font-size="7.4" text-anchor="end" textLength="39" lengthAdjust="spacingAndGlyphs">H =&#160; 1.600 m</text><text x="754" y="384.5" font-size="7.4" text-anchor="end" textLength="39" lengthAdjust="spacingAndGlyphs">H =&#160; 4.000 m</text><text x="754" y="469.5" font-size="7.4" text-anchor="end" textLength="39" lengthAdjust="spacingAndGlyphs">H =&#160; 2.400 m</text><text x="754" y="507.5" font-size="7.4" text-anchor="end" textLength="39" lengthAdjust="spacingAndGlyphs">H =&#160; 2.400 m</text><text x="754" y="545.0" font-size="7.4" text-anchor="end" textLength="39" lengthAdjust="spacingAndGlyphs">H =&#160; 2.400 m</text><text x="754" y="583.0" font-size="7.4" text-anchor="end" textLength="39" lengthAdjust="spacingAndGlyphs">H =&#160; 2.400 m</text><text x="754" y="709.5" font-size="7.4" text-anchor="end" textLength="39" lengthAdjust="spacingAndGlyphs">H =&#160; 0.000 m</text><text x="754" y="747.5" font-size="7.4" text-anchor="end" textLength="39" lengthAdjust="spacingAndGlyphs">H =&#160; 0.000 m</text><text x="754" y="785.5" font-size="7.4" text-anchor="end" textLength="39" lengthAdjust="spacingAndGlyphs">H =&#160; 0.000 m</text><text x="830" y="384.5" font-size="7.4" text-anchor="end" textLength="39" lengthAdjust="spacingAndGlyphs">H =&#160; 4.000 m</text><text x="830" y="469.5" font-size="7.4" text-anchor="end" textLength="39" lengthAdjust="spacingAndGlyphs">H =&#160; 2.400 m</text><text x="830" y="583.0" font-size="7.4" text-anchor="end" textLength="39" lengthAdjust="spacingAndGlyphs">H =&#160; 2.400 m</text><text x="830" y="709.5" font-size="7.4" text-anchor="end" textLength="39" lengthAdjust="spacingAndGlyphs">H =&#160; 0.000 m</text><text x="906" y="384.5" font-size="7.4" text-anchor="end" textLength="39" lengthAdjust="spacingAndGlyphs">H =&#160; 4.000 m</text><text x="906" y="469.5" font-size="7.4" text-anchor="end" textLength="39" lengthAdjust="spacingAndGlyphs">H =&#160; 2.400 m</text><text x="906" y="583.0" font-size="7.4" text-anchor="end" textLength="39" lengthAdjust="spacingAndGlyphs">H =&#160; 2.400 m</text><text x="906" y="709.5" font-size="7.4" text-anchor="end" textLength="39" lengthAdjust="spacingAndGlyphs">H =&#160; 0.000 m</text><text x="906" y="785.5" font-size="7.4" text-anchor="end" textLength="39" lengthAdjust="spacingAndGlyphs">H =&#160; 0.000 m</text></g>
<g fill="#111" stroke="#111" stroke-width="0.3" font-size="13" font-family="Liberation Sans"><text x="189" y="420.7" text-anchor="middle" textLength="28" lengthAdjust="spacingAndGlyphs">Beton</text><text x="484" y="410.7" text-anchor="middle" textLength="30.5" lengthAdjust="spacingAndGlyphs">Rasen</text><text x="483" y="446.7" text-anchor="middle" textLength="21.4" lengthAdjust="spacingAndGlyphs">Weg</text><text x="225" y="519.7" text-anchor="middle" textLength="25" lengthAdjust="spacingAndGlyphs">Sand</text><text x="485" y="524.7" text-anchor="middle" textLength="30.5" lengthAdjust="spacingAndGlyphs">Rasen</text><text x="483" y="600.7" text-anchor="middle" textLength="21.4" lengthAdjust="spacingAndGlyphs">Weg</text><text x="184" y="644.7" text-anchor="middle" textLength="28" lengthAdjust="spacingAndGlyphs">Beton</text><text x="486" y="645.7" text-anchor="middle" textLength="30.5" lengthAdjust="spacingAndGlyphs">Rasen</text><text x="484" y="688.7" text-anchor="middle" textLength="21.4" lengthAdjust="spacingAndGlyphs">Weg</text><text x="225" y="742.7" text-anchor="middle" textLength="25" lengthAdjust="spacingAndGlyphs">Sand</text><text x="487" y="745.7" text-anchor="middle" textLength="30.5" lengthAdjust="spacingAndGlyphs">Rasen</text><text x="797" y="421.7" text-anchor="middle" textLength="25" lengthAdjust="spacingAndGlyphs">Sand</text><text x="840" y="524.7" text-anchor="middle" textLength="28" lengthAdjust="spacingAndGlyphs">Beton</text><text x="797" y="651.7" text-anchor="middle" textLength="25" lengthAdjust="spacingAndGlyphs">Sand</text><text x="840" y="748.7" text-anchor="middle" textLength="28" lengthAdjust="spacingAndGlyphs">Beton</text></g>
<g>
<line x1="48" y1="943.5" x2="81" y2="943.5" stroke="#a99" stroke-width="1.4" stroke-dasharray="2,2"/>
<line x1="88" y1="952" x2="88" y2="990" stroke="#9a9" stroke-width="1.4" stroke-dasharray="2,2"/>
<rect x="76.5" y="932.5" width="23" height="23" fill="none" stroke="#777" stroke-width="1" stroke-dasharray="2,2"/>
<line x1="88" y1="897" x2="88" y2="940" stroke="#3a9a3a" stroke-width="2"/>
<line x1="92" y1="943.5" x2="133" y2="943.5" stroke="#e01010" stroke-width="2"/>
<rect x="81.5" y="937" width="13" height="13" fill="#0a10d8"/>
<rect x="87" y="942.5" width="2.4" height="2.4" fill="#fff"/>
<text x="88" y="893" font-size="13" font-weight="bold" fill="#2aa02a" stroke="#2aa02a" stroke-width="0.7" text-anchor="middle">Y</text>
<text x="143" y="949" font-size="13" font-weight="bold" fill="#d01010" stroke="#d01010" stroke-width="0.7" text-anchor="middle">X</text>
<text x="72.5" y="965.5" font-size="13" font-weight="bold" fill="#0a10d8" stroke="#0a10d8" stroke-width="0.7" text-anchor="middle">Z</text>
</g>
<g transform="translate(44,1013)"><rect x="-3" y="-3" width="6" height="6" fill="#e05060"/><rect x="-2" y="-2" width="4" height="4" fill="#f08090"/>
<path d="M-6,-4 L-3,-6 L-6,-7Z M6,-4 L3,-6 L6,-7Z M-6,4 L-3,6 L-6,7Z M6,4 L3,6 L6,7Z M-7,-1 L-5,0 L-7,1Z M7,-1 L5,0 L7,1Z M-1,-7 L0,-5 L1,-7Z M-1,7 L0,5 L1,7Z" fill="#3a4f78"/></g>
</svg>
<svg class="a" style="left:962px;top:129px" width="929" height="899" viewBox="962 129 929 899">
<defs>
<filter id="gn" x="0" y="0" width="100%" height="100%" filterUnits="objectBoundingBox"><feTurbulence type="fractalNoise" baseFrequency="0.9" numOctaves="2" seed="7" result="t"/><feColorMatrix in="t" type="matrix" values="0 0 0 0 0  0 0 0 0 0  0 0 0 0 0  0 0 0 -1.6 0.95"/></filter>
<filter id="cn" x="0" y="0" width="100%" height="100%" filterUnits="objectBoundingBox"><feTurbulence type="fractalNoise" baseFrequency="0.06 0.12" numOctaves="3" seed="11" result="t"/><feColorMatrix in="t" type="matrix" values="0 0 0 0 0  0 0 0 0 0  0 0 0 0 0  0 0 0 -2.2 1.25"/></filter>
<filter id="sn" x="0" y="0" width="100%" height="100%"><feTurbulence type="fractalNoise" baseFrequency="0.05" numOctaves="3" seed="2" result="t"/><feColorMatrix in="t" type="matrix" values="0 0 0 0 0  0 0 0 0 0  0 0 0 0 0  0 0 0 -1.5 0.85"/><feComposite in2="SourceGraphic" operator="in"/></filter>
<linearGradient id="rg1" gradientUnits="userSpaceOnUse" x1="962" y1="0" x2="1120" y2="0"><stop offset="0" stop-color="#c2c2c2"/><stop offset="0.35" stop-color="#a8a8a8"/><stop offset="1" stop-color="#a4a4a4"/></linearGradient>
<clipPath id="gclip"><polygon points="1187,364 1584,291 1630,353 1717,372 1803.7,479.6 1850.4,525.6 1491,813 1380,897 1283,715 1179,612 1074,418"/></clipPath>
</defs>
<polygon points="1187.0,364.0 1584.0,291.0 1630.0,353.0 1717.0,372.0 1803.7,479.6 1850.4,525.6 1491.0,813.0 1380.0,897.0 1283.0,715.0 1179.0,612.0 1074.0,418.0" fill="#578628"/>
<rect x="960" y="129" width="931" height="899" fill="#1a3008" filter="url(#gn)" opacity="0.3" clip-path="url(#gclip)"/>
<path d="M1210,373 C1230.3,371.0 1303.7,363.0 1332.0,361.0 C1360.3,359.0 1356.2,359.9 1380.0,361.0 C1403.8,362.1 1448.8,366.3 1475.0,367.5 C1501.2,368.7 1516.8,368.9 1537.0,368.0 C1557.2,367.1 1586.2,363.2 1596.0,362.3 L1618,368.2 C1600.0,369.5 1547.2,375.9 1510.0,376.0 C1472.8,376.1 1422.2,370.0 1395.0,369.0 C1367.8,368.0 1374.7,367.7 1347.0,370.0 C1319.3,372.3 1248.7,380.8 1229.0,383.0 Z" fill="#bdbcc1" stroke="#111" stroke-width="1.1" stroke-linejoin="round"/>
<clipPath id="c0"><path d="M1210,373 C1230.3,371.0 1303.7,363.0 1332.0,361.0 C1360.3,359.0 1356.2,359.9 1380.0,361.0 C1403.8,362.1 1448.8,366.3 1475.0,367.5 C1501.2,368.7 1516.8,368.9 1537.0,368.0 C1557.2,367.1 1586.2,363.2 1596.0,362.3 L1618,368.2 C1600.0,369.5 1547.2,375.9 1510.0,376.0 C1472.8,376.1 1422.2,370.0 1395.0,369.0 C1367.8,368.0 1374.7,367.7 1347.0,370.0 C1319.3,372.3 1248.7,380.8 1229.0,383.0 Z"/></clipPath>
<rect x="962" y="129" width="929" height="899" fill="#8a8a90" filter="url(#cn)" opacity="0.07" clip-path="url(#c0)"/>
<path d="M1288.5,570 C1307.9,562.0 1366.6,540.0 1405.0,522.0 C1443.4,504.0 1484.7,482.3 1519.0,462.0 C1553.3,441.7 1589.4,414.2 1611.0,400.0 C1632.6,385.8 1642.3,380.8 1648.6,377.0 L1680,384 C1676.1,386.7 1665.5,394.0 1656.7,400.0 C1647.9,406.0 1646.5,406.8 1627.0,420.0 C1607.5,433.2 1568.8,461.0 1540.0,479.0 C1511.2,497.0 1491.5,509.2 1454.5,528.0 C1417.5,546.8 1340.8,581.3 1318.0,592.0 Z" fill="#bdbcc1" stroke="#111" stroke-width="1.1" stroke-linejoin="round"/>
<clipPath id="c1"><path d="M1288.5,570 C1307.9,562.0 1366.6,540.0 1405.0,522.0 C1443.4,504.0 1484.7,482.3 1519.0,462.0 C1553.3,441.7 1589.4,414.2 1611.0,400.0 C1632.6,385.8 1642.3,380.8 1648.6,377.0 L1680,384 C1676.1,386.7 1665.5,394.0 1656.7,400.0 C1647.9,406.0 1646.5,406.8 1627.0,420.0 C1607.5,433.2 1568.8,461.0 1540.0,479.0 C1511.2,497.0 1491.5,509.2 1454.5,528.0 C1417.5,546.8 1340.8,581.3 1318.0,592.0 Z"/></clipPath>
<rect x="962" y="129" width="929" height="899" fill="#8a8a90" filter="url(#cn)" opacity="0.07" clip-path="url(#c1)"/>
<path d="M1352,620 C1356.7,617.8 1364.5,613.5 1380.0,607.0 C1395.5,600.5 1423.3,589.2 1445.0,581.0 C1466.7,572.8 1487.5,564.0 1510.0,557.6 C1532.5,551.2 1549.2,549.0 1580.0,542.7 C1610.8,536.4 1662.9,526.7 1695.0,519.6 C1727.1,512.5 1759.7,503.3 1772.6,500.0 L1811,511.5 C1791.7,516.8 1733.5,533.2 1695.0,543.0 C1656.5,552.8 1606.6,564.2 1580.0,570.5 C1553.4,576.8 1551.5,575.6 1535.5,581.0 C1519.5,586.4 1508.3,591.5 1484.0,603.0 C1459.7,614.5 1405.3,642.2 1389.6,650.0 Z" fill="#bdbcc1" stroke="#111" stroke-width="1.1" stroke-linejoin="round"/>
<clipPath id="c2"><path d="M1352,620 C1356.7,617.8 1364.5,613.5 1380.0,607.0 C1395.5,600.5 1423.3,589.2 1445.0,581.0 C1466.7,572.8 1487.5,564.0 1510.0,557.6 C1532.5,551.2 1549.2,549.0 1580.0,542.7 C1610.8,536.4 1662.9,526.7 1695.0,519.6 C1727.1,512.5 1759.7,503.3 1772.6,500.0 L1811,511.5 C1791.7,516.8 1733.5,533.2 1695.0,543.0 C1656.5,552.8 1606.6,564.2 1580.0,570.5 C1553.4,576.8 1551.5,575.6 1535.5,581.0 C1519.5,586.4 1508.3,591.5 1484.0,603.0 C1459.7,614.5 1405.3,642.2 1389.6,650.0 Z"/></clipPath>
<rect x="962" y="129" width="929" height="899" fill="#8a8a90" filter="url(#cn)" opacity="0.07" clip-path="url(#c2)"/>
<polygon points="958.0,404.5 1187.0,364.0 1229.0,383.0 1074.0,418.0 958.0,438.5" fill="#d3d3d6" stroke="#111" stroke-width="1.1" stroke-linejoin="round"/>
<clipPath id="c3"><polygon points="958.0,404.5 1187.0,364.0 1229.0,383.0 1074.0,418.0 958.0,438.5"/></clipPath>
<rect x="962" y="129" width="929" height="899" fill="#8a8a90" filter="url(#cn)" opacity="0.05" clip-path="url(#c3)"/>
<polygon points="922.0,445.0 1080.0,417.0 1190.0,610.0 1007.0,683.0" fill="url(#rg1)"/>
<polygon points="922.0,445.0 1080.0,417.0 1083.5,423.1 924.7,452.5" fill="#ececec"/>
<polygon points="929.1,464.8 1089.2,433.1 1092.7,439.2 931.8,472.4" fill="#ececec"/>
<polygon points="936.2,484.7 1098.3,449.2 1101.8,455.3 938.9,492.2" fill="#ececec"/>
<polygon points="943.2,504.5 1107.5,465.2 1111.0,471.4 945.9,512.0" fill="#ececec"/>
<polygon points="950.3,524.3 1116.7,481.3 1120.2,487.4 953.0,531.9" fill="#ececec"/>
<polygon points="957.4,544.2 1125.8,497.4 1129.3,503.5 960.1,551.7" fill="#ececec"/>
<polygon points="964.5,564.0 1135.0,513.5 1138.5,519.6 967.2,571.5" fill="#ececec"/>
<polygon points="971.6,583.8 1144.2,529.6 1147.7,535.7 974.3,591.4" fill="#ececec"/>
<polygon points="978.7,603.7 1153.3,545.7 1156.8,551.8 981.4,611.2" fill="#ececec"/>
<polygon points="985.8,623.5 1162.5,561.8 1166.0,567.9 988.4,631.0" fill="#ececec"/>
<polygon points="992.8,643.3 1171.7,577.8 1175.2,583.9 995.5,650.9" fill="#ececec"/>
<polygon points="999.9,663.2 1180.8,593.9 1184.3,600.0 1002.6,670.7" fill="#ececec"/>
<line x1="922.0" y1="445.0" x2="1080.0" y2="417.0" stroke="#111" stroke-width="1"/>
<line x1="924.7" y1="452.5" x2="1083.5" y2="423.1" stroke="#111" stroke-width="1"/>
<line x1="929.1" y1="464.8" x2="1089.2" y2="433.1" stroke="#111" stroke-width="1"/>
<line x1="931.8" y1="472.4" x2="1092.7" y2="439.2" stroke="#111" stroke-width="1"/>
<line x1="936.2" y1="484.7" x2="1098.3" y2="449.2" stroke="#111" stroke-width="1"/>
<line x1="938.9" y1="492.2" x2="1101.8" y2="455.3" stroke="#111" stroke-width="1"/>
<line x1="943.2" y1="504.5" x2="1107.5" y2="465.2" stroke="#111" stroke-width="1"/>
<line x1="945.9" y1="512.0" x2="1111.0" y2="471.4" stroke="#111" stroke-width="1"/>
<line x1="950.3" y1="524.3" x2="1116.7" y2="481.3" stroke="#111" stroke-width="1"/>
<line x1="953.0" y1="531.9" x2="1120.2" y2="487.4" stroke="#111" stroke-width="1"/>
<line x1="957.4" y1="544.2" x2="1125.8" y2="497.4" stroke="#111" stroke-width="1"/>
<line x1="960.1" y1="551.7" x2="1129.3" y2="503.5" stroke="#111" stroke-width="1"/>
<line x1="964.5" y1="564.0" x2="1135.0" y2="513.5" stroke="#111" stroke-width="1"/>
<line x1="967.2" y1="571.5" x2="1138.5" y2="519.6" stroke="#111" stroke-width="1"/>
<line x1="971.6" y1="583.8" x2="1144.2" y2="529.6" stroke="#111" stroke-width="1"/>
<line x1="974.3" y1="591.4" x2="1147.7" y2="535.7" stroke="#111" stroke-width="1"/>
<line x1="978.7" y1="603.7" x2="1153.3" y2="545.7" stroke="#111" stroke-width="1"/>
<line x1="981.4" y1="611.2" x2="1156.8" y2="551.8" stroke="#111" stroke-width="1"/>
<line x1="985.8" y1="623.5" x2="1162.5" y2="561.8" stroke="#111" stroke-width="1"/>
<line x1="988.4" y1="631.0" x2="1166.0" y2="567.9" stroke="#111" stroke-width="1"/>
<line x1="992.8" y1="643.3" x2="1171.7" y2="577.8" stroke="#111" stroke-width="1"/>
<line x1="995.5" y1="650.9" x2="1175.2" y2="583.9" stroke="#111" stroke-width="1"/>
<line x1="999.9" y1="663.2" x2="1180.8" y2="593.9" stroke="#111" stroke-width="1"/>
<line x1="1002.6" y1="670.7" x2="1184.3" y2="600.0" stroke="#111" stroke-width="1"/>
<line x1="1007.0" y1="683.0" x2="1190.0" y2="610.0" stroke="#111" stroke-width="1"/>
<path d="M1074,418 L1229,383 C1240,430 1246,470 1256,502 C1265,530 1275,550 1288.5,570 L1179,612 L1179.0,612.0 L1175.4,603.1 L1170.2,595.8 L1166.7,586.9 L1161.5,579.7 L1157.9,570.8 L1152.8,563.5 L1149.2,554.6 L1144.0,547.3 L1140.4,538.4 L1135.2,531.2 L1131.7,522.3 L1126.5,515.0 L1122.9,506.1 L1117.8,498.8 L1114.2,489.9 L1109.0,482.7 L1105.4,473.8 L1100.2,466.5 L1096.7,457.6 L1091.5,450.3 L1087.9,441.4 L1082.8,434.2 L1079.2,425.3 L1074.0,418.0 Z" fill="#d8c08e" stroke="#111" stroke-width="1.1" stroke-linejoin="round"/>
<clipPath id="c4"><path d="M1074,418 L1229,383 C1240,430 1246,470 1256,502 C1265,530 1275,550 1288.5,570 L1179,612 L1179.0,612.0 L1175.4,603.1 L1170.2,595.8 L1166.7,586.9 L1161.5,579.7 L1157.9,570.8 L1152.8,563.5 L1149.2,554.6 L1144.0,547.3 L1140.4,538.4 L1135.2,531.2 L1131.7,522.3 L1126.5,515.0 L1122.9,506.1 L1117.8,498.8 L1114.2,489.9 L1109.0,482.7 L1105.4,473.8 L1100.2,466.5 L1096.7,457.6 L1091.5,450.3 L1087.9,441.4 L1082.8,434.2 L1079.2,425.3 L1074.0,418.0 Z"/></clipPath>
<rect x="962" y="129" width="929" height="899" fill="#8a6a3a" filter="url(#cn)" opacity="0.045" clip-path="url(#c4)"/>
<path d="M1049,666 L1179,612 L1288.5,570 L1389.6,650 L1272,714 L1122,792 L1090,800 L1025,672 L1049,666 Z" fill="#d3d3d6" stroke="#111" stroke-width="1.1" stroke-linejoin="round"/>
<clipPath id="c5"><path d="M1049,666 L1179,612 L1288.5,570 L1389.6,650 L1272,714 L1122,792 L1090,800 L1025,672 L1049,666 Z"/></clipPath>
<rect x="962" y="129" width="929" height="899" fill="#8a8a90" filter="url(#cn)" opacity="0.05" clip-path="url(#c5)"/>
<polygon points="1082.0,812.8 1283.0,708.3 1390.0,905.0 1190.0,1060.0" fill="#a4a4a6"/>
<polygon points="1082.0,812.8 1283.0,708.3 1291.8,724.5 1090.9,833.2" fill="#ececec"/>
<polygon points="1095.5,843.7 1296.4,732.9 1305.2,749.1 1104.4,864.1" fill="#ececec"/>
<polygon points="1109.0,874.6 1309.8,757.5 1318.6,773.7 1117.9,895.0" fill="#ececec"/>
<polygon points="1122.5,905.5 1323.1,782.1 1332.0,798.3 1131.4,925.9" fill="#ececec"/>
<polygon points="1136.0,936.4 1336.5,806.6 1345.3,822.9 1144.9,956.8" fill="#ececec"/>
<polygon points="1149.5,967.3 1349.9,831.2 1358.7,847.5 1158.4,987.7" fill="#ececec"/>
<polygon points="1163.0,998.2 1363.2,855.8 1372.1,872.1 1171.9,1018.6" fill="#ececec"/>
<polygon points="1176.5,1029.1 1376.6,880.4 1385.5,896.6 1185.4,1049.5" fill="#ececec"/>
<line x1="1082.0" y1="812.8" x2="1283.0" y2="708.3" stroke="#111" stroke-width="1"/>
<line x1="1090.9" y1="833.2" x2="1291.8" y2="724.5" stroke="#111" stroke-width="1"/>
<line x1="1095.5" y1="843.7" x2="1296.4" y2="732.9" stroke="#111" stroke-width="1"/>
<line x1="1104.4" y1="864.1" x2="1305.2" y2="749.1" stroke="#111" stroke-width="1"/>
<line x1="1109.0" y1="874.6" x2="1309.8" y2="757.5" stroke="#111" stroke-width="1"/>
<line x1="1117.9" y1="895.0" x2="1318.6" y2="773.7" stroke="#111" stroke-width="1"/>
<line x1="1122.5" y1="905.5" x2="1323.1" y2="782.1" stroke="#111" stroke-width="1"/>
<line x1="1131.4" y1="925.9" x2="1332.0" y2="798.3" stroke="#111" stroke-width="1"/>
<line x1="1136.0" y1="936.4" x2="1336.5" y2="806.6" stroke="#111" stroke-width="1"/>
<line x1="1144.9" y1="956.8" x2="1345.3" y2="822.9" stroke="#111" stroke-width="1"/>
<line x1="1149.5" y1="967.3" x2="1349.9" y2="831.2" stroke="#111" stroke-width="1"/>
<line x1="1158.4" y1="987.7" x2="1358.7" y2="847.5" stroke="#111" stroke-width="1"/>
<line x1="1163.0" y1="998.2" x2="1363.2" y2="855.8" stroke="#111" stroke-width="1"/>
<line x1="1171.9" y1="1018.6" x2="1372.1" y2="872.1" stroke="#111" stroke-width="1"/>
<line x1="1176.5" y1="1029.1" x2="1376.6" y2="880.4" stroke="#111" stroke-width="1"/>
<line x1="1185.4" y1="1049.5" x2="1385.5" y2="896.6" stroke="#111" stroke-width="1"/>
<line x1="1190.0" y1="1060.0" x2="1390.0" y2="905.0" stroke="#111" stroke-width="1"/>
<polygon points="1235.0,1026.0 1380.0,915.0 1380.0,925.0 1240.0,1032.0" fill="#fff"/>
<path d="M1272,714 L1389.6,650 C1395.2,659.2 1413.2,687.2 1423.3,705.0 C1433.4,722.8 1438.7,738.7 1450.0,756.7 C1461.3,774.7 1484.2,803.6 1491.0,813.0 L1380,897 L1380.0,897.0 L1372.9,884.4 L1366.5,874.1 L1359.4,861.5 L1353.0,851.2 L1345.9,838.7 L1339.5,828.4 L1332.4,815.8 L1326.0,805.5 L1318.9,792.9 L1312.5,782.6 L1305.4,770.0 L1299.0,759.8 L1291.9,747.2 L1285.5,736.9 L1278.4,724.3 L1272.0,714.0 Z" fill="#d8c08e" stroke="#111" stroke-width="1.1" stroke-linejoin="round"/>
<clipPath id="c6"><path d="M1272,714 L1389.6,650 C1395.2,659.2 1413.2,687.2 1423.3,705.0 C1433.4,722.8 1438.7,738.7 1450.0,756.7 C1461.3,774.7 1484.2,803.6 1491.0,813.0 L1380,897 L1380.0,897.0 L1372.9,884.4 L1366.5,874.1 L1359.4,861.5 L1353.0,851.2 L1345.9,838.7 L1339.5,828.4 L1332.4,815.8 L1326.0,805.5 L1318.9,792.9 L1312.5,782.6 L1305.4,770.0 L1299.0,759.8 L1291.9,747.2 L1285.5,736.9 L1278.4,724.3 L1272.0,714.0 Z"/></clipPath>
<rect x="962" y="129" width="929" height="899" fill="#8a6a3a" filter="url(#cn)" opacity="0.045" clip-path="url(#c6)"/>
<polygon points="1491.0,813.0 1380.0,897.0 1380.0,915.0 1491.0,825.0" fill="#a08c6a" stroke="#111" stroke-width="1.1" stroke-linejoin="round"/>
<polygon points="1850.4,525.6 1491.0,813.0 1491.0,822.0 1850.4,534.5" fill="#4b3b2c" stroke="#111" stroke-width="1.1" stroke-linejoin="round"/>
<path d="M958,470 L962,490 C969.7,505.0 993.5,550.7 1008.0,580.0 C1022.5,609.3 1036.5,641.0 1049.0,666.0 C1061.5,691.0 1070.8,709.0 1083.0,730.0 C1095.2,751.0 1105.8,764.4 1122.0,792.0 C1138.2,819.6 1165.2,867.6 1180.0,895.6 C1194.8,923.6 1201.8,938.3 1211.0,960.0 C1220.2,981.7 1231.0,1015.0 1235.0,1026.0 L1250,1040 L958,1040 Z" fill="#fff"/>
<path d="M962,490 C969.7,505.0 993.5,550.7 1008.0,580.0 C1022.5,609.3 1036.5,641.0 1049.0,666.0 C1061.5,691.0 1070.8,709.0 1083.0,730.0 C1095.2,751.0 1105.8,764.4 1122.0,792.0 C1138.2,819.6 1165.2,867.6 1180.0,895.6 C1194.8,923.6 1201.8,938.3 1211.0,960.0 C1220.2,981.7 1231.0,1015.0 1235.0,1026.0" fill="none" stroke="#111" stroke-width="2"/>
<path d="M1547,298 L1584,291 L1630,353 L1594,362 C1591.5,358.7 1583.7,349.4 1579.3,342.2 C1574.9,334.9 1572.8,325.9 1567.4,318.5 C1562.0,311.1 1550.4,301.4 1547.0,298.0 Z" fill="#d8c08e" stroke="#111" stroke-width="1.1" stroke-linejoin="round"/>
<clipPath id="c7"><path d="M1547,298 L1584,291 L1630,353 L1594,362 C1591.5,358.7 1583.7,349.4 1579.3,342.2 C1574.9,334.9 1572.8,325.9 1567.4,318.5 C1562.0,311.1 1550.4,301.4 1547.0,298.0 Z"/></clipPath>
<rect x="962" y="129" width="929" height="899" fill="#8a6a3a" filter="url(#cn)" opacity="0.045" clip-path="url(#c7)"/>
<polygon points="1584.0,291.0 1622.0,286.0 1664.0,342.0 1630.0,353.0" fill="#a9a9ab"/>
<polygon points="1584.0,291.0 1624.0,286.0 1625.8,288.4 1586.0,293.6" fill="#f2f2f2"/>
<polygon points="1586.0,293.6 1625.8,288.4 1629.2,292.5 1589.8,298.8" fill="#b6b6b8"/>
<polygon points="1584.0,291.0 1587.5,290.5 1599.7,297.4 1589.8,298.8" fill="#48484a"/>
<line x1="1584.0" y1="291.0" x2="1624.0" y2="286.0" stroke="#111" stroke-width="1.1"/>
<line x1="1624.0" y1="286.0" x2="1629.2" y2="293.0" stroke="#111" stroke-width="1.6"/>
<polygon points="1589.8,298.8 1629.2,293.0 1631.0,295.4 1591.7,301.4" fill="#f2f2f2"/>
<polygon points="1591.7,301.4 1631.0,295.4 1634.5,299.5 1595.5,306.5" fill="#b6b6b8"/>
<polygon points="1589.8,298.8 1593.2,298.3 1605.4,305.2 1595.5,306.5" fill="#48484a"/>
<line x1="1589.8" y1="298.8" x2="1629.2" y2="293.0" stroke="#111" stroke-width="1.1"/>
<line x1="1629.2" y1="293.0" x2="1634.5" y2="300.0" stroke="#111" stroke-width="1.6"/>
<polygon points="1595.5,306.5 1634.5,300.0 1636.3,302.4 1597.5,309.1" fill="#f2f2f2"/>
<polygon points="1597.5,309.1 1636.3,302.4 1639.8,306.5 1601.2,314.2" fill="#b6b6b8"/>
<polygon points="1595.5,306.5 1599.0,306.0 1611.2,312.9 1601.2,314.2" fill="#48484a"/>
<line x1="1595.5" y1="306.5" x2="1634.5" y2="300.0" stroke="#111" stroke-width="1.1"/>
<line x1="1634.5" y1="300.0" x2="1639.8" y2="307.0" stroke="#111" stroke-width="1.6"/>
<polygon points="1601.2,314.2 1639.8,307.0 1641.5,309.4 1603.2,316.9" fill="#f2f2f2"/>
<polygon points="1603.2,316.9 1641.5,309.4 1645.0,313.5 1607.0,322.0" fill="#b6b6b8"/>
<polygon points="1601.2,314.2 1604.7,313.8 1616.9,320.7 1607.0,322.0" fill="#48484a"/>
<line x1="1601.2" y1="314.2" x2="1639.8" y2="307.0" stroke="#111" stroke-width="1.1"/>
<line x1="1639.8" y1="307.0" x2="1645.0" y2="314.0" stroke="#111" stroke-width="1.6"/>
<polygon points="1607.0,322.0 1645.0,314.0 1646.8,316.4 1609.0,324.6" fill="#f2f2f2"/>
<polygon points="1609.0,324.6 1646.8,316.4 1650.2,320.5 1612.8,329.8" fill="#b6b6b8"/>
<polygon points="1607.0,322.0 1610.5,321.5 1622.7,328.4 1612.8,329.8" fill="#48484a"/>
<line x1="1607.0" y1="322.0" x2="1645.0" y2="314.0" stroke="#111" stroke-width="1.1"/>
<line x1="1645.0" y1="314.0" x2="1650.2" y2="321.0" stroke="#111" stroke-width="1.6"/>
<polygon points="1612.8,329.8 1650.2,321.0 1652.0,323.4 1614.7,332.4" fill="#f2f2f2"/>
<polygon points="1614.7,332.4 1652.0,323.4 1655.5,327.5 1618.5,337.5" fill="#b6b6b8"/>
<polygon points="1612.8,329.8 1616.2,329.3 1628.4,336.2 1618.5,337.5" fill="#48484a"/>
<line x1="1612.8" y1="329.8" x2="1650.2" y2="321.0" stroke="#111" stroke-width="1.1"/>
<line x1="1650.2" y1="321.0" x2="1655.5" y2="328.0" stroke="#111" stroke-width="1.6"/>
<polygon points="1618.5,337.5 1655.5,328.0 1657.3,330.4 1620.5,340.1" fill="#f2f2f2"/>
<polygon points="1620.5,340.1 1657.3,330.4 1660.8,334.5 1624.2,345.2" fill="#b6b6b8"/>
<polygon points="1618.5,337.5 1622.0,337.0 1634.2,343.9 1624.2,345.2" fill="#48484a"/>
<line x1="1618.5" y1="337.5" x2="1655.5" y2="328.0" stroke="#111" stroke-width="1.1"/>
<line x1="1655.5" y1="328.0" x2="1660.8" y2="335.0" stroke="#111" stroke-width="1.6"/>
<polygon points="1624.2,345.2 1660.8,335.0 1662.5,337.4 1626.2,347.9" fill="#f2f2f2"/>
<polygon points="1626.2,347.9 1662.5,337.4 1666.0,341.5 1630.0,353.0" fill="#b6b6b8"/>
<polygon points="1624.2,345.2 1627.7,344.8 1639.9,351.7 1630.0,353.0" fill="#48484a"/>
<line x1="1624.2" y1="345.2" x2="1660.8" y2="335.0" stroke="#111" stroke-width="1.1"/>
<line x1="1660.8" y1="335.0" x2="1666.0" y2="342.0" stroke="#111" stroke-width="1.6"/>
<polyline points="1584.0,291.0 1630.0,353.0 1664.0,342.0" fill="none" stroke="#111" stroke-width="1.2"/>
<polygon points="1594.0,362.0 1630.0,353.0 1664.0,342.0 1754.0,361.5 1717.0,372.0 1680.0,384.0" fill="#d3d3d6" stroke="#111" stroke-width="1.1" stroke-linejoin="round"/>
<clipPath id="c8"><polygon points="1594.0,362.0 1630.0,353.0 1664.0,342.0 1754.0,361.5 1717.0,372.0 1680.0,384.0"/></clipPath>
<rect x="962" y="129" width="929" height="899" fill="#8a8a90" filter="url(#cn)" opacity="0.05" clip-path="url(#c8)"/>
<path d="M1680,384 L1717,372 L1803.7,479.6 L1772.6,499 C1768.5,495.1 1754.8,484.4 1748.0,475.6 C1741.2,466.8 1737.4,457.9 1732.0,446.0 C1726.6,434.1 1724.3,414.8 1715.6,404.5 C1706.9,394.2 1685.9,387.4 1680.0,384.0 Z" fill="#d8c08e" stroke="#111" stroke-width="1.1" stroke-linejoin="round"/>
<clipPath id="c9"><path d="M1680,384 L1717,372 L1803.7,479.6 L1772.6,499 C1768.5,495.1 1754.8,484.4 1748.0,475.6 C1741.2,466.8 1737.4,457.9 1732.0,446.0 C1726.6,434.1 1724.3,414.8 1715.6,404.5 C1706.9,394.2 1685.9,387.4 1680.0,384.0 Z"/></clipPath>
<rect x="962" y="129" width="929" height="899" fill="#8a6a3a" filter="url(#cn)" opacity="0.045" clip-path="url(#c9)"/>
<polygon points="1717.0,372.0 1754.0,361.5 1833.5,462.0 1803.7,479.6" fill="#a9a9ab"/>
<polygon points="1717.0,372.0 1756.0,361.5 1758.3,364.3 1719.5,375.0" fill="#f2f2f2"/>
<polygon points="1719.5,375.0 1758.3,364.3 1762.6,369.4 1724.2,381.0" fill="#b6b6b8"/>
<polygon points="1717.0,372.0 1720.4,371.0 1733.8,378.2 1724.2,381.0" fill="#48484a"/>
<line x1="1717.0" y1="372.0" x2="1756.0" y2="361.5" stroke="#111" stroke-width="1.1"/>
<line x1="1756.0" y1="361.5" x2="1762.6" y2="369.9" stroke="#111" stroke-width="1.6"/>
<polygon points="1724.2,381.0 1762.6,369.9 1764.9,372.7 1726.7,384.0" fill="#f2f2f2"/>
<polygon points="1726.7,384.0 1764.9,372.7 1769.2,377.8 1731.5,389.9" fill="#b6b6b8"/>
<polygon points="1724.2,381.0 1727.6,380.0 1741.1,387.2 1731.5,389.9" fill="#48484a"/>
<line x1="1724.2" y1="381.0" x2="1762.6" y2="369.9" stroke="#111" stroke-width="1.1"/>
<line x1="1762.6" y1="369.9" x2="1769.2" y2="378.2" stroke="#111" stroke-width="1.6"/>
<polygon points="1731.5,389.9 1769.2,378.2 1771.5,381.1 1733.9,393.0" fill="#f2f2f2"/>
<polygon points="1733.9,393.0 1771.5,381.1 1775.9,386.1 1738.7,398.9" fill="#b6b6b8"/>
<polygon points="1731.5,389.9 1734.8,389.0 1748.3,396.2 1738.7,398.9" fill="#48484a"/>
<line x1="1731.5" y1="389.9" x2="1769.2" y2="378.2" stroke="#111" stroke-width="1.1"/>
<line x1="1769.2" y1="378.2" x2="1775.9" y2="386.6" stroke="#111" stroke-width="1.6"/>
<polygon points="1738.7,398.9 1775.9,386.6 1778.1,389.5 1741.1,401.9" fill="#f2f2f2"/>
<polygon points="1741.1,401.9 1778.1,389.5 1782.5,394.5 1745.9,407.9" fill="#b6b6b8"/>
<polygon points="1738.7,398.9 1742.0,397.9 1755.5,405.1 1745.9,407.9" fill="#48484a"/>
<line x1="1738.7" y1="398.9" x2="1775.9" y2="386.6" stroke="#111" stroke-width="1.1"/>
<line x1="1775.9" y1="386.6" x2="1782.5" y2="395.0" stroke="#111" stroke-width="1.6"/>
<polygon points="1745.9,407.9 1782.5,395.0 1784.8,397.8 1748.4,410.9" fill="#f2f2f2"/>
<polygon points="1748.4,410.9 1784.8,397.8 1789.1,402.9 1753.1,416.8" fill="#b6b6b8"/>
<polygon points="1745.9,407.9 1749.3,406.9 1762.7,414.1 1753.1,416.8" fill="#48484a"/>
<line x1="1745.9" y1="407.9" x2="1782.5" y2="395.0" stroke="#111" stroke-width="1.1"/>
<line x1="1782.5" y1="395.0" x2="1789.1" y2="403.4" stroke="#111" stroke-width="1.6"/>
<polygon points="1753.1,416.8 1789.1,403.4 1791.4,406.2 1755.6,419.9" fill="#f2f2f2"/>
<polygon points="1755.6,419.9 1791.4,406.2 1795.8,411.2 1760.3,425.8" fill="#b6b6b8"/>
<polygon points="1753.1,416.8 1756.5,415.9 1770.0,423.1 1760.3,425.8" fill="#48484a"/>
<line x1="1753.1" y1="416.8" x2="1789.1" y2="403.4" stroke="#111" stroke-width="1.1"/>
<line x1="1789.1" y1="403.4" x2="1795.8" y2="411.8" stroke="#111" stroke-width="1.6"/>
<polygon points="1760.3,425.8 1795.8,411.8 1798.0,414.6 1762.8,428.8" fill="#f2f2f2"/>
<polygon points="1762.8,428.8 1798.0,414.6 1802.4,419.6 1767.6,434.8" fill="#b6b6b8"/>
<polygon points="1760.3,425.8 1763.7,424.8 1777.2,432.0 1767.6,434.8" fill="#48484a"/>
<line x1="1760.3" y1="425.8" x2="1795.8" y2="411.8" stroke="#111" stroke-width="1.1"/>
<line x1="1795.8" y1="411.8" x2="1802.4" y2="420.1" stroke="#111" stroke-width="1.6"/>
<polygon points="1767.6,434.8 1802.4,420.1 1804.6,423.0 1770.0,437.8" fill="#f2f2f2"/>
<polygon points="1770.0,437.8 1804.6,423.0 1809.0,428.0 1774.8,443.7" fill="#b6b6b8"/>
<polygon points="1767.6,434.8 1770.9,433.8 1784.4,441.0 1774.8,443.7" fill="#48484a"/>
<line x1="1767.6" y1="434.8" x2="1802.4" y2="420.1" stroke="#111" stroke-width="1.1"/>
<line x1="1802.4" y1="420.1" x2="1809.0" y2="428.5" stroke="#111" stroke-width="1.6"/>
<polygon points="1774.8,443.7 1809.0,428.5 1811.3,431.3 1777.3,446.8" fill="#f2f2f2"/>
<polygon points="1777.3,446.8 1811.3,431.3 1815.6,436.4 1782.0,452.7" fill="#b6b6b8"/>
<polygon points="1774.8,443.7 1778.2,442.8 1791.6,450.0 1782.0,452.7" fill="#48484a"/>
<line x1="1774.8" y1="443.7" x2="1809.0" y2="428.5" stroke="#111" stroke-width="1.1"/>
<line x1="1809.0" y1="428.5" x2="1815.6" y2="436.9" stroke="#111" stroke-width="1.6"/>
<polygon points="1782.0,452.7 1815.6,436.9 1817.9,439.7 1784.5,455.7" fill="#f2f2f2"/>
<polygon points="1784.5,455.7 1817.9,439.7 1822.2,444.8 1789.2,461.7" fill="#b6b6b8"/>
<polygon points="1782.0,452.7 1785.4,451.7 1798.9,458.9 1789.2,461.7" fill="#48484a"/>
<line x1="1782.0" y1="452.7" x2="1815.6" y2="436.9" stroke="#111" stroke-width="1.1"/>
<line x1="1815.6" y1="436.9" x2="1822.2" y2="445.2" stroke="#111" stroke-width="1.6"/>
<polygon points="1789.2,461.7 1822.2,445.2 1824.5,448.1 1791.7,464.7" fill="#f2f2f2"/>
<polygon points="1791.7,464.7 1824.5,448.1 1828.9,453.1 1796.5,470.6" fill="#b6b6b8"/>
<polygon points="1789.2,461.7 1792.6,460.7 1806.1,467.9 1796.5,470.6" fill="#48484a"/>
<line x1="1789.2" y1="461.7" x2="1822.2" y2="445.2" stroke="#111" stroke-width="1.1"/>
<line x1="1822.2" y1="445.2" x2="1828.9" y2="453.6" stroke="#111" stroke-width="1.6"/>
<polygon points="1796.5,470.6 1828.9,453.6 1831.1,456.5 1798.9,473.7" fill="#f2f2f2"/>
<polygon points="1798.9,473.7 1831.1,456.5 1835.5,461.5 1803.7,479.6" fill="#b6b6b8"/>
<polygon points="1796.5,470.6 1799.8,469.7 1813.3,476.9 1803.7,479.6" fill="#48484a"/>
<line x1="1796.5" y1="470.6" x2="1828.9" y2="453.6" stroke="#111" stroke-width="1.1"/>
<line x1="1828.9" y1="453.6" x2="1835.5" y2="462.0" stroke="#111" stroke-width="1.6"/>
<polyline points="1717.0,372.0 1803.7,479.6 1833.5,462.0" fill="none" stroke="#111" stroke-width="1.2"/>
<polygon points="1772.6,499.0 1803.7,479.6 1833.5,462.0 1891.0,478.3 1891.0,495.0 1850.4,525.6" fill="#d3d3d6" stroke="#111" stroke-width="1.1" stroke-linejoin="round"/>
<clipPath id="c10"><polygon points="1772.6,499.0 1803.7,479.6 1833.5,462.0 1891.0,478.3 1891.0,495.0 1850.4,525.6"/></clipPath>
<rect x="962" y="129" width="929" height="899" fill="#8a8a90" filter="url(#cn)" opacity="0.05" clip-path="url(#c10)"/>
<polygon points="1850.4,525.6 1891.0,495.0 1891.0,501.0 1850.4,531.5" fill="#bdbdbd" stroke="#111" stroke-width="1.1" stroke-linejoin="round"/>
<polyline points="958,404.5 1187,364 1547,298 1584,291 1622,286" fill="none" stroke="#111" stroke-width="1.2"/>
<g>
<path d="M1005,931 L1016,938 M1038,939 L1052,933" stroke="none"/>
<g stroke="#999" stroke-width="1.2" stroke-dasharray="2,2" fill="none">
<polygon points="1026.7,925 1042,932 1042,952 1026.7,962 1011,953 1011,932"/>
<line x1="1014" y1="952" x2="986" y2="965"/><line x1="1040" y1="952" x2="1065" y2="970"/>
</g>
<line x1="1027" y1="895" x2="1027" y2="934" stroke="#1010d0" stroke-width="2.2"/>
<line x1="1016" y1="938" x2="1005" y2="931.5" stroke="#2a9a2a" stroke-width="2"/>
<line x1="1038" y1="939" x2="1052" y2="933" stroke="#d01010" stroke-width="2"/>
<polygon points="1026.7,933.7 1015.6,938.1 1025.9,944 1038.5,939.6" fill="#0a10d8"/>
<polygon points="1015.6,938.1 1025.9,944 1025.9,958 1017,953" fill="#f07070"/>
<polygon points="1025.9,944 1038.5,939.6 1038.5,953 1025.9,958" fill="#70e070"/>
<text x="1026.5" y="890" font-size="13" font-weight="bold" fill="#1010d0" stroke="#1010d0" stroke-width="0.7" text-anchor="middle">Z</text>
<text x="997" y="932" font-size="13" font-weight="bold" fill="#2aa02a" stroke="#2aa02a" stroke-width="0.7" text-anchor="middle">Y</text>
<text x="1061" y="935" font-size="13" font-weight="bold" fill="#d01010" stroke="#d01010" stroke-width="0.7" text-anchor="middle">X</text>
</g>
<g transform="translate(978,1013)"><rect x="-3" y="-3" width="6" height="6" fill="#e8e8e8" stroke="#bbb" stroke-width="0.8"/>
<path d="M-6,-4 L-3,-6 L-6,-7Z M6,-4 L3,-6 L6,-7Z M-6,4 L-3,6 L-6,7Z M6,4 L3,6 L6,7Z M-7,-1 L-5,0 L-7,1Z M7,-1 L5,0 L7,1Z M-1,-7 L0,-5 L1,-7Z M-1,7 L0,5 L1,7Z" fill="#3a4f78"/></g>
</svg>
<div class="a" style="left:451px;top:129px;width:85px;height:26px;background:#dfe7f1"></div>
<div class="a" style="left:1357px;top:128px;width:138px;height:27px;background:#bcd2ea"></div>
<svg class="a" style="left:1855px;top:133px" width="32" height="16">
<rect x="4" y="3.5" width="10" height="8" fill="none" stroke="#2a4f9c" stroke-width="2"/>
<path d="M19,3 L27,12 M27,3 L19,12" stroke="#2d4c8c" stroke-width="2.6"/>
</svg>

<!-- right sidebar -->
<div class="a" style="left:1893px;top:127px;width:23px;height:903px;background:#fff"></div>
<div class="a" style="left:1916px;top:30px;width:4px;height:1050px;background:#b4cce6"></div>
<div class="a" style="left:1896px;top:129px;width:19px;height:297px;border-left:1px solid #a6a6a6;border-right:2px solid #a6a6a6;border-top:2px solid #a6a6a6;border-bottom:2px solid #a6a6a6;border-radius:3px 0 0 0"></div>
<div class="a" style="left:1896px;top:427px;width:19px;height:298px;border-left:1px solid #a6a6a6;border-right:2px solid #a6a6a6;border-bottom:2px solid #a6a6a6"></div>
<div class="a" style="left:1896px;top:726px;width:19px;height:296px;border-left:1px solid #a6a6a6;border-right:2px solid #a6a6a6;border-bottom:2px solid #a6a6a6"></div>

<!-- prompt bar -->
<div class="a" style="left:4px;top:1030px;width:1912px;height:29px;background:#dde5ee"></div>
<div class="a" style="left:4px;top:1030px;width:529px;height:28px;background:#fff;border-right:1px solid #b8c0c8"></div>
<div class="a" style="left:9px;top:1033px;width:2px;height:22px;border-left:1px solid #a0a0a0;border-bottom:1px solid #a0a0a0;width:3px"></div>
<div class="a" style="left:4px;top:1058px;width:1912px;height:1px;background:#b0b0b0"></div>

<!-- status bar -->
<div class="a" style="left:4px;top:1059px;width:1912px;height:19px;background:#e9e9e9"></div>
<svg class="a" style="left:130px;top:0" width="350" height="30" viewBox="130 0 350 30">
<g transform="translate(141,6.5)"><path d="M2,6 L7,2 L17,2 L17,13 L12,17 L2,17Z" fill="#9fb6d6" stroke="#3b5e9b" stroke-width="1.3"/><path d="M2,6 L12,6 L17,2 M12,6 L12,17 M7,6 L7,17 M2,11.5 L12,11.5" stroke="#3b5e9b" stroke-width="1.1" fill="none"/></g>
<g transform="translate(162,6.5)"><rect x="1" y="2" width="16" height="15" fill="#f4f4f4" stroke="#555" stroke-width="1.2"/><rect x="5" y="6" width="2" height="2" fill="#333"/><rect x="9" y="6" width="2" height="2" fill="#e0a000"/><rect x="13" y="6" width="2" height="2" fill="#c02030"/><rect x="5" y="11" width="2" height="2" fill="#333"/><rect x="9" y="11" width="2" height="2" fill="#333"/><rect x="13" y="11" width="2" height="2" fill="#333"/><path d="M3,5 L3,14" stroke="#444" stroke-width="0.8" stroke-dasharray="1,1"/></g>
<g transform="translate(183.3,6.5)"><rect x="1" y="1.5" width="16" height="16" rx="1.5" fill="#9fb6d6" stroke="#3b5e9b" stroke-width="1.3"/><rect x="4" y="3" width="10" height="5" fill="#e8eef6"/><rect x="5" y="11" width="8" height="6" fill="#fff"/><rect x="7" y="13" width="2" height="3" fill="#333"/></g>
<g transform="translate(204,6.5)"><rect x="2" y="3" width="13" height="15" fill="#eaeaea" stroke="#666" stroke-width="1.2"/><path d="M7,12 L15,2 L18,4.5 L10,14Z" fill="#3b6ab0"/><circle cx="8" cy="12.5" r="1" fill="#111"/></g>
<g transform="translate(236.2,6.5)"><rect x="1" y="2" width="16" height="13" fill="#f0f0f0" stroke="#555" stroke-width="1.2"/><circle cx="8" cy="8.5" r="4" fill="#fff" stroke="#3b5e9b" stroke-width="1.5"/><path d="M5,11.5 L1,16" stroke="#3b5e9b" stroke-width="2"/><path d="M13,11 L17,11" stroke="#555" stroke-width="1"/></g>
<g transform="translate(258.6,6.5)"><path d="M16,15 C16,8 12,6 6,7 L6,3 L1,8.5 L6,14 L6,10 C10,10 13,11 16,15Z" fill="none" stroke="#b8c4d2" stroke-width="1.3"/></g>
<g transform="translate(288.7,6.5)"><path d="M2,15 C2,8 6,6 12,7 L12,3 L17,8.5 L12,14 L12,10 C8,10 5,11 2,15Z" fill="none" stroke="#b8c4d2" stroke-width="1.3"/></g>
<g transform="translate(321.5,6.5)"><path d="M7,5 L3,5 Q2,5 2,6 L2,13 Q2,14 3,14 L5,14 M11,14 L15,14 Q16,14 16,13 L16,6 Q16,5 15,5 L13,5" stroke="#3b5e9b" stroke-width="2.2" fill="none"/><path d="M7,1.5 L11,5 L7,8.5Z M11,10.5 L7,14 L11,17.5Z" fill="#3b5e9b"/></g>
<g transform="translate(354,6.5)"><rect x="1" y="2" width="16" height="15" fill="#fff" stroke="#555" stroke-width="1" stroke-dasharray="2,1"/><path d="M3,9.5 C6,5 12,5 15,9.5 C12,13 6,13 3,9.5Z" fill="#3b5e9b"/><circle cx="9" cy="9.5" r="2" fill="#fff"/></g>
<g transform="translate(385.7,6.5)"><rect x="1" y="2" width="16" height="15" fill="#f4f4f4" stroke="#666" stroke-width="1.2"/><path d="M9,2 L9,17 M1,9.5 L9,9.5" stroke="#666" stroke-width="1"/><text x="13" y="16" font-size="9" fill="#333" text-anchor="middle" font-weight="bold">2</text></g>
<g transform="translate(417.2,6.5)"><path d="M3,3 L16,16" stroke="#777" stroke-width="3"/><path d="M16,3 L3,16" stroke="#777" stroke-width="3"/><path d="M11,8 L16,2 L18,4 L12,10Z" fill="#3b6ab0"/><circle cx="4" cy="4" r="2.5" fill="#777"/></g>
<path d="M225.4,15.5 L231.4,15.5 L228.4,18.5Z" fill="#333"/>
<path d="M278.3,15.5 L284.3,15.5 L281.3,18.5Z" fill="#333"/>
<path d="M310.2,15.5 L316.2,15.5 L313.2,18.5Z" fill="#333"/>
<path d="M342.6,15.5 L348.6,15.5 L345.6,18.5Z" fill="#333"/>
<path d="M374.5,15.5 L380.5,15.5 L377.5,18.5Z" fill="#333"/>
<path d="M406.4,15.5 L412.4,15.5 L409.4,18.5Z" fill="#333"/>
<path d="M438.7,15.5 L444.7,15.5 L441.7,18.5Z" fill="#333"/>
<path d="M462.4,15.5 L468.4,15.5 L465.4,18.5Z" fill="#333"/>
<path d="M462.5,11.5 L468.5,11.5" stroke="#333" stroke-width="1"/>
</svg>
<svg class="a" style="left:1670px;top:0" width="250" height="30" viewBox="1670 0 250 30">
<circle cx="1687" cy="11" r="4.2" fill="#3d68a6"/><path d="M1679,23 C1679,17 1683,15 1687,15 C1691,15 1695,17 1695,23Z" fill="#3d68a6"/>
<rect x="1779" y="7" width="14" height="4" fill="#3d68a6"/><rect x="1779" y="12" width="14" height="4" fill="#3d68a6"/><rect x="1779" y="17" width="14" height="4" fill="#3d68a6"/><rect x="1780" y="8" width="2" height="2" fill="#3c3"/><rect x="1780" y="13" width="2" height="2" fill="#fc3"/><rect x="1780" y="18" width="2" height="2" fill="#c36"/>
<path d="M1799,8 L1802,8 L1804,18 L1813,18 L1814,11 L1803,11" fill="#3d68a6" stroke="#3d68a6" stroke-width="1.5"/><rect x="1803" y="19" width="3" height="2" fill="#777"/><rect x="1810" y="19" width="3" height="2" fill="#777"/>
<circle cx="1828.9" cy="14" r="6.5" fill="#fff" stroke="#3d68a6" stroke-width="1.4"/><text x="1828.9" y="18" font-size="10" font-weight="bold" fill="#3d68a6" text-anchor="middle">?</text>
<path d="M1841,15 L1847,15 L1844,18Z" fill="#555"/>
<rect x="1857" y="16" width="10" height="2.2" fill="#333"/>
<rect x="1879.5" y="11.5" width="9.5" height="8" fill="none" stroke="#333" stroke-width="1.6"/><rect x="1879.5" y="11.5" width="9.5" height="2.5" fill="#333"/>
<path d="M1901,11 L1911,21 M1911,11 L1901,21" stroke="#333" stroke-width="2.4"/>
</svg>
<svg class="a" style="left:1860px;top:32px" width="56" height="24" viewBox="1860 32 56 24">
<circle cx="1870.5" cy="44" r="5.2" fill="none" stroke="#3d78c0" stroke-width="3" stroke-dasharray="2.2,1.6"/><circle cx="1870.5" cy="44" r="3.5" fill="none" stroke="#3d78c0" stroke-width="1.4"/>
<circle cx="1901" cy="41.5" r="5" fill="none" stroke="#3d78c0" stroke-width="1.5"/><path d="M1897.3,45.2 L1892.5,50" stroke="#3d78c0" stroke-width="2.2"/>
</svg>
<div class="a" style="left:661.5px;top:1060px;width:1px;height:18px;background:#fff;border-left:1px solid #cfcfcf"></div>
<div class="a" style="left:1020px;top:1060px;width:1px;height:18px;background:#fff;border-left:1px solid #cfcfcf"></div>
<div class="a" style="left:1348px;top:1060px;width:1px;height:18px;background:#fff;border-left:1px solid #cfcfcf"></div>
<div class="a" style="left:1474px;top:1060px;width:1px;height:18px;background:#fff;border-left:1px solid #cfcfcf"></div>
<div class="a" style="left:1566.5px;top:1060px;width:1px;height:18px;background:#fff;border-left:1px solid #cfcfcf"></div>
<div class="a" style="left:1661px;top:1060px;width:1px;height:18px;background:#fff;border-left:1px solid #cfcfcf"></div>
<div class="a" style="left:1711.5px;top:1060px;width:1px;height:18px;background:#fff;border-left:1px solid #cfcfcf"></div>
<div class="a" style="left:1761.5px;top:1060px;width:1px;height:18px;background:#fff;border-left:1px solid #cfcfcf"></div>
<svg class="a" style="left:1765px;top:1061px" width="18" height="18"><path d="M2,2 L15,2 L15,13 L9,13 L6,16 L6,13 L2,13Z" fill="#fff" stroke="#666" stroke-width="1"/><path d="M8.5,4 L8.5,9" stroke="#d02020" stroke-width="2"/><rect x="7.5" y="10.2" width="2" height="2" fill="#d02020"/></svg>
<div class="a" style="left:0;top:1078px;width:1920px;height:2px;background:#b4cce6"></div>
<svg class="a" style="left:0;top:0;pointer-events:none" width="1920" height="1080" viewBox="0 0 1920 1080" font-family="Liberation Sans">
<text x="41.5" y="20.8" font-size="11.2" fill="#fff" font-weight="normal" text-anchor="start" textLength="47.5" lengthAdjust="spacingAndGlyphs" stroke="#fff" stroke-width="0.25">ALLPLAN</text>
<text x="98" y="20.8" font-size="11.2" fill="#fff" font-weight="normal" text-anchor="start" textLength="13" lengthAdjust="spacingAndGlyphs" stroke="#fff" stroke-width="0.25">26</text>
<text x="656" y="20" font-size="12.3" fill="#1a1a1a" font-weight="normal" text-anchor="start" textLength="749" lengthAdjust="spacingAndGlyphs" stroke="#1a1a1a" stroke-width="0.12">ALLPLAN 2026 - CDS - Add-On und Parts 2026 - Add-On PatchWork/Filme Entwicklungsstand:TB9439 - Beispiel Treppen am Hang</text>
<text x="1698" y="19" font-size="11.5" fill="#1a1a2a" font-weight="normal" text-anchor="start" textLength="75" lengthAdjust="spacingAndGlyphs" stroke="#1a1a2a" stroke-width="0.12">Thierry Metzler</text>
<text x="61" y="49.8" font-size="12.3" fill="#1a1a1a" font-weight="normal" text-anchor="start" textLength="46.25" lengthAdjust="spacingAndGlyphs" stroke="#1a1a1a" stroke-width="0.12">3D Bema</text>
<text x="130" y="49.8" font-size="12.3" fill="#1a1a1a" font-weight="normal" text-anchor="start" textLength="43.75" lengthAdjust="spacingAndGlyphs" stroke="#1a1a1a" stroke-width="0.12">3D Must</text>
<text x="196" y="49.8" font-size="12.3" fill="#1a1a1a" font-weight="normal" text-anchor="start" textLength="44.25" lengthAdjust="spacingAndGlyphs" stroke="#1a1a1a" stroke-width="0.12">Baugrub</text>
<text x="263" y="49.8" font-size="12.3" fill="#1a1a1a" font-weight="normal" text-anchor="start" textLength="42" lengthAdjust="spacingAndGlyphs" stroke="#1a1a1a" stroke-width="0.12">BCF-Vie</text>
<text x="327.5" y="49.8" font-size="12.3" fill="#1a1a1a" font-weight="normal" text-anchor="start" textLength="45" lengthAdjust="spacingAndGlyphs" stroke="#1a1a1a" stroke-width="0.12">CityGML</text>
<text x="395" y="49.8" font-size="12.3" fill="#1a1a1a" font-weight="normal" text-anchor="start" textLength="42.5" lengthAdjust="spacingAndGlyphs" stroke="#1a1a1a" stroke-width="0.12">Element</text>
<text x="460" y="49.8" font-size="12.3" fill="#1a1a1a" font-weight="normal" text-anchor="start" textLength="42.5" lengthAdjust="spacingAndGlyphs" stroke="#1a1a1a" stroke-width="0.12">Element</text>
<text x="525" y="49.8" font-size="12.3" fill="#1a1a1a" font-weight="normal" text-anchor="start" textLength="41.75" lengthAdjust="spacingAndGlyphs" stroke="#1a1a1a" stroke-width="0.12">Fahrspu</text>
<text x="589" y="49.8" font-size="12.3" fill="#1a1a1a" font-weight="normal" text-anchor="start" textLength="45.75" lengthAdjust="spacingAndGlyphs" stroke="#1a1a1a" stroke-width="0.12">Geometr</text>
<text x="657" y="49.8" font-size="12.3" fill="#1a1a1a" font-weight="normal" text-anchor="start" textLength="31" lengthAdjust="spacingAndGlyphs" stroke="#1a1a1a" stroke-width="0.12">Grafik</text>
<text x="713" y="49.8" font-size="12.3" fill="#1a1a1a" font-weight="normal" text-anchor="start" textLength="32.75" lengthAdjust="spacingAndGlyphs" stroke="#1a1a1a" stroke-width="0.12">Klassif</text>
<text x="768" y="49.8" font-size="12.3" fill="#1a1a1a" font-weight="normal" text-anchor="start" textLength="38.75" lengthAdjust="spacingAndGlyphs" stroke="#1a1a1a" stroke-width="0.12">Linieng</text>
<text x="829" y="49.8" font-size="12.3" fill="#1a1a1a" font-weight="normal" text-anchor="start" textLength="39.5" lengthAdjust="spacingAndGlyphs" stroke="#1a1a1a" stroke-width="0.12">Lokal-B</text>
<text x="891" y="49.8" font-size="12.3" fill="#1a1a1a" font-weight="normal" text-anchor="start" textLength="48.25" lengthAdjust="spacingAndGlyphs" stroke="#1a1a1a" stroke-width="0.12">Mengen-</text>
<text x="962.5" y="49.8" font-size="12.3" fill="#1a1a1a" font-weight="normal" text-anchor="start" textLength="43.25" lengthAdjust="spacingAndGlyphs" stroke="#1a1a1a" stroke-width="0.12">Modelln</text>
<text x="1028" y="49.8" font-size="12.3" fill="#1a1a1a" font-weight="normal" text-anchor="start" textLength="38.5" lengthAdjust="spacingAndGlyphs" stroke="#1a1a1a" stroke-width="0.12">Oberflä</text>
<text x="1089" y="49.8" font-size="12.3" fill="#2a8ad4" font-weight="normal" text-anchor="start" textLength="47.75" lengthAdjust="spacingAndGlyphs" stroke="#2a8ad4" stroke-width="0.12">PatchWo</text>
<text x="1159" y="49.8" font-size="12.3" fill="#1a1a1a" font-weight="normal" text-anchor="start" textLength="34.5" lengthAdjust="spacingAndGlyphs" stroke="#1a1a1a" stroke-width="0.12">Profilb</text>
<text x="1216" y="49.8" font-size="12.3" fill="#1a1a1a" font-weight="normal" text-anchor="start" textLength="36.75" lengthAdjust="spacingAndGlyphs" stroke="#1a1a1a" stroke-width="0.12">Projekt</text>
<text x="1275.5" y="49.8" font-size="12.3" fill="#1a1a1a" font-weight="normal" text-anchor="start" textLength="37" lengthAdjust="spacingAndGlyphs" stroke="#1a1a1a" stroke-width="0.12">Rampe</text>
<text x="1334" y="49.8" font-size="12.3" fill="#1a1a1a" font-weight="normal" text-anchor="start" textLength="36.5" lengthAdjust="spacingAndGlyphs" stroke="#1a1a1a" stroke-width="0.12">Rohrlei</text>
<text x="1393" y="49.8" font-size="12.3" fill="#1a1a1a" font-weight="normal" text-anchor="start" textLength="42.5" lengthAdjust="spacingAndGlyphs" stroke="#1a1a1a" stroke-width="0.12">SketchU</text>
<text x="1458" y="49.8" font-size="12.3" fill="#1a1a1a" font-weight="normal" text-anchor="start" textLength="40.25" lengthAdjust="spacingAndGlyphs" stroke="#1a1a1a" stroke-width="0.12">Ständer</text>
<text x="1520" y="49.8" font-size="12.3" fill="#1a1a1a" font-weight="normal" text-anchor="start" textLength="40" lengthAdjust="spacingAndGlyphs" stroke="#1a1a1a" stroke-width="0.12">Stilman</text>
<text x="1582" y="49.8" font-size="12.3" fill="#1a1a1a" font-weight="normal" text-anchor="start" textLength="38" lengthAdjust="spacingAndGlyphs" stroke="#1a1a1a" stroke-width="0.12">Planlay</text>
<text x="86" y="124.6" font-size="10.6" fill="#111" font-weight="normal" text-anchor="middle" textLength="55" lengthAdjust="spacingAndGlyphs" >PatchWork</text>
<text x="236" y="124.6" font-size="10.6" fill="#111" font-weight="normal" text-anchor="middle" textLength="41" lengthAdjust="spacingAndGlyphs" >Diverses</text>
<text x="452" y="124.6" font-size="10.6" fill="#111" font-weight="normal" text-anchor="middle" textLength="35" lengthAdjust="spacingAndGlyphs" >Ändern</text>
<text x="644.5" y="124.6" font-size="10.6" fill="#111" font-weight="normal" text-anchor="middle" textLength="55" lengthAdjust="spacingAndGlyphs" >Bearbeiten</text>
<text x="765" y="124.6" font-size="10.6" fill="#111" font-weight="normal" text-anchor="middle" textLength="38" lengthAdjust="spacingAndGlyphs" >Messen</text>
<text x="848.5" y="124.6" font-size="10.6" fill="#111" font-weight="normal" text-anchor="middle" textLength="75" lengthAdjust="spacingAndGlyphs" >Auswertungen</text>
<text x="932" y="124.6" font-size="10.6" fill="#111" font-weight="normal" text-anchor="middle" textLength="48" lengthAdjust="spacingAndGlyphs" >Attribute</text>
<text x="1016" y="124.6" font-size="10.6" fill="#111" font-weight="normal" text-anchor="middle" textLength="28" lengthAdjust="spacingAndGlyphs" >Filter</text>
<text x="1112" y="124.6" font-size="10.6" fill="#111" font-weight="normal" text-anchor="middle" textLength="80" lengthAdjust="spacingAndGlyphs" >Arbeitsumgeb...</text>
<text x="461" y="146.8" font-size="13" fill="#8a9099" font-weight="normal" text-anchor="start" textLength="65.6" lengthAdjust="spacingAndGlyphs" >Grundriss:1</text>
<text x="1367" y="146.8" font-size="13" fill="#111" font-weight="normal" text-anchor="start" textLength="119" lengthAdjust="spacingAndGlyphs" >Zentralperspektive:2</text>
<text x="0" y="0" font-size="11" fill="#222" font-weight="normal" text-anchor="start" textLength="70" lengthAdjust="spacingAndGlyphs" transform="translate(20,312.6) rotate(-90)">Eigenschaften</text>
<text x="0" y="0" font-size="11" fill="#222" font-weight="normal" text-anchor="start" textLength="38" lengthAdjust="spacingAndGlyphs" transform="translate(20,593) rotate(-90)">Objekte</text>
<text x="0" y="0" font-size="11" fill="#222" font-weight="normal" text-anchor="start" textLength="28" lengthAdjust="spacingAndGlyphs" transform="translate(19.5,888) rotate(-90)">Layer</text>
<text x="0" y="0" font-size="11" fill="#222" font-weight="normal" text-anchor="start" textLength="56" lengthAdjust="spacingAndGlyphs" transform="translate(1902,249.6) rotate(90)">Assistenten</text>
<text x="0" y="0" font-size="11" fill="#222" font-weight="normal" text-anchor="start" textLength="44" lengthAdjust="spacingAndGlyphs" transform="translate(1902,554.8) rotate(90)">Bibliothek</text>
<text x="0" y="0" font-size="11" fill="#222" font-weight="normal" text-anchor="start" textLength="36.3" lengthAdjust="spacingAndGlyphs" transform="translate(1901.5,853.7) rotate(90)">Ebenen</text>
<text x="16.3" y="1047.6" font-size="11.6" fill="#000" font-weight="bold" text-anchor="start" textLength="503.7" lengthAdjust="spacingAndGlyphs" >Klick links zum Auswählen, Strg+Klick zum Hinzufügen, Umschalt+Klick zur Segmentwahl</text>
<text x="5.8" y="1074.5" font-size="11.3" fill="#111" font-weight="normal" text-anchor="start" textLength="192" lengthAdjust="spacingAndGlyphs" stroke="#111" stroke-width="0.12">Drücken Sie F1, um Hilfe zu erhalten.</text>
<text x="481" y="1074.5" font-size="11.3" fill="#111" font-weight="normal" text-anchor="start" textLength="28.3" lengthAdjust="spacingAndGlyphs" stroke="#111" stroke-width="0.12">Land:</text>
<text x="517.7" y="1074.5" font-size="11.3" fill="#111" font-weight="normal" text-anchor="start" textLength="42.3" lengthAdjust="spacingAndGlyphs" stroke="#111" stroke-width="0.12">Schweiz</text>
<text x="666" y="1074.5" font-size="11.3" fill="#111" font-weight="normal" text-anchor="start" textLength="138.3" lengthAdjust="spacingAndGlyphs" stroke="#111" stroke-width="0.12">Grafische Überschreibung:</text>
<text x="812.7" y="1074.5" font-size="11.3" fill="#111" font-weight="normal" text-anchor="start" textLength="20" lengthAdjust="spacingAndGlyphs" stroke="#111" stroke-width="0.12">Aus</text>
<text x="1024" y="1074.5" font-size="11.3" fill="#111" font-weight="normal" text-anchor="start" textLength="81.7" lengthAdjust="spacingAndGlyphs" stroke="#111" stroke-width="0.12">Zeichnungstyp:</text>
<text x="1114" y="1074.5" font-size="11.3" fill="#111" font-weight="normal" text-anchor="start" textLength="62" lengthAdjust="spacingAndGlyphs" stroke="#111" stroke-width="0.12">Baueingabe</text>
<text x="1182.7" y="1074.5" font-size="11.3" fill="#111" font-weight="normal" text-anchor="start" textLength="4" lengthAdjust="spacingAndGlyphs" stroke="#111" stroke-width="0.12">-</text>
<text x="1193.3" y="1074.5" font-size="11.3" fill="#111" font-weight="normal" text-anchor="start" textLength="75" lengthAdjust="spacingAndGlyphs" stroke="#111" stroke-width="0.12">Neubau farbig</text>
<text x="1353.3" y="1074.5" font-size="11.3" fill="#111" font-weight="normal" text-anchor="start" textLength="48.3" lengthAdjust="spacingAndGlyphs" stroke="#111" stroke-width="0.12">Maßstab:</text>
<text x="1410" y="1074.5" font-size="11.3" fill="#111" font-weight="normal" text-anchor="start" textLength="26.7" lengthAdjust="spacingAndGlyphs" stroke="#111" stroke-width="0.12">1 : 50</text>
<text x="1478.3" y="1074.5" font-size="11.3" fill="#111" font-weight="normal" text-anchor="start" textLength="34" lengthAdjust="spacingAndGlyphs" stroke="#111" stroke-width="0.12">Länge:</text>
<text x="1520.7" y="1074.5" font-size="11.3" fill="#111" font-weight="normal" text-anchor="start" textLength="11" lengthAdjust="spacingAndGlyphs" stroke="#111" stroke-width="0.12">m</text>
<text x="1570.7" y="1074.5" font-size="11.3" fill="#111" font-weight="normal" text-anchor="start" textLength="38.7" lengthAdjust="spacingAndGlyphs" stroke="#111" stroke-width="0.12">Winkel:</text>
<text x="1617.7" y="1074.5" font-size="11.3" fill="#111" font-weight="normal" text-anchor="start" textLength="27.3" lengthAdjust="spacingAndGlyphs" stroke="#111" stroke-width="0.12">0.000</text>
<text x="1665" y="1074.5" font-size="11.3" fill="#111" font-weight="normal" text-anchor="start" textLength="19.3" lengthAdjust="spacingAndGlyphs" stroke="#111" stroke-width="0.12">deg</text>
<text x="1715" y="1074.5" font-size="11.3" fill="#111" font-weight="normal" text-anchor="start" textLength="12.7" lengthAdjust="spacingAndGlyphs" stroke="#111" stroke-width="0.12">%:</text>
<text x="1736.7" y="1074.5" font-size="11.3" fill="#111" font-weight="normal" text-anchor="start" textLength="5" lengthAdjust="spacingAndGlyphs" stroke="#111" stroke-width="0.12">1</text>
<text x="1787.3" y="1074.5" font-size="11.3" fill="#111" font-weight="normal" text-anchor="start" textLength="96" lengthAdjust="spacingAndGlyphs" stroke="#111" stroke-width="0.12">Benachrichtungen</text>
</svg>
</body></html>
